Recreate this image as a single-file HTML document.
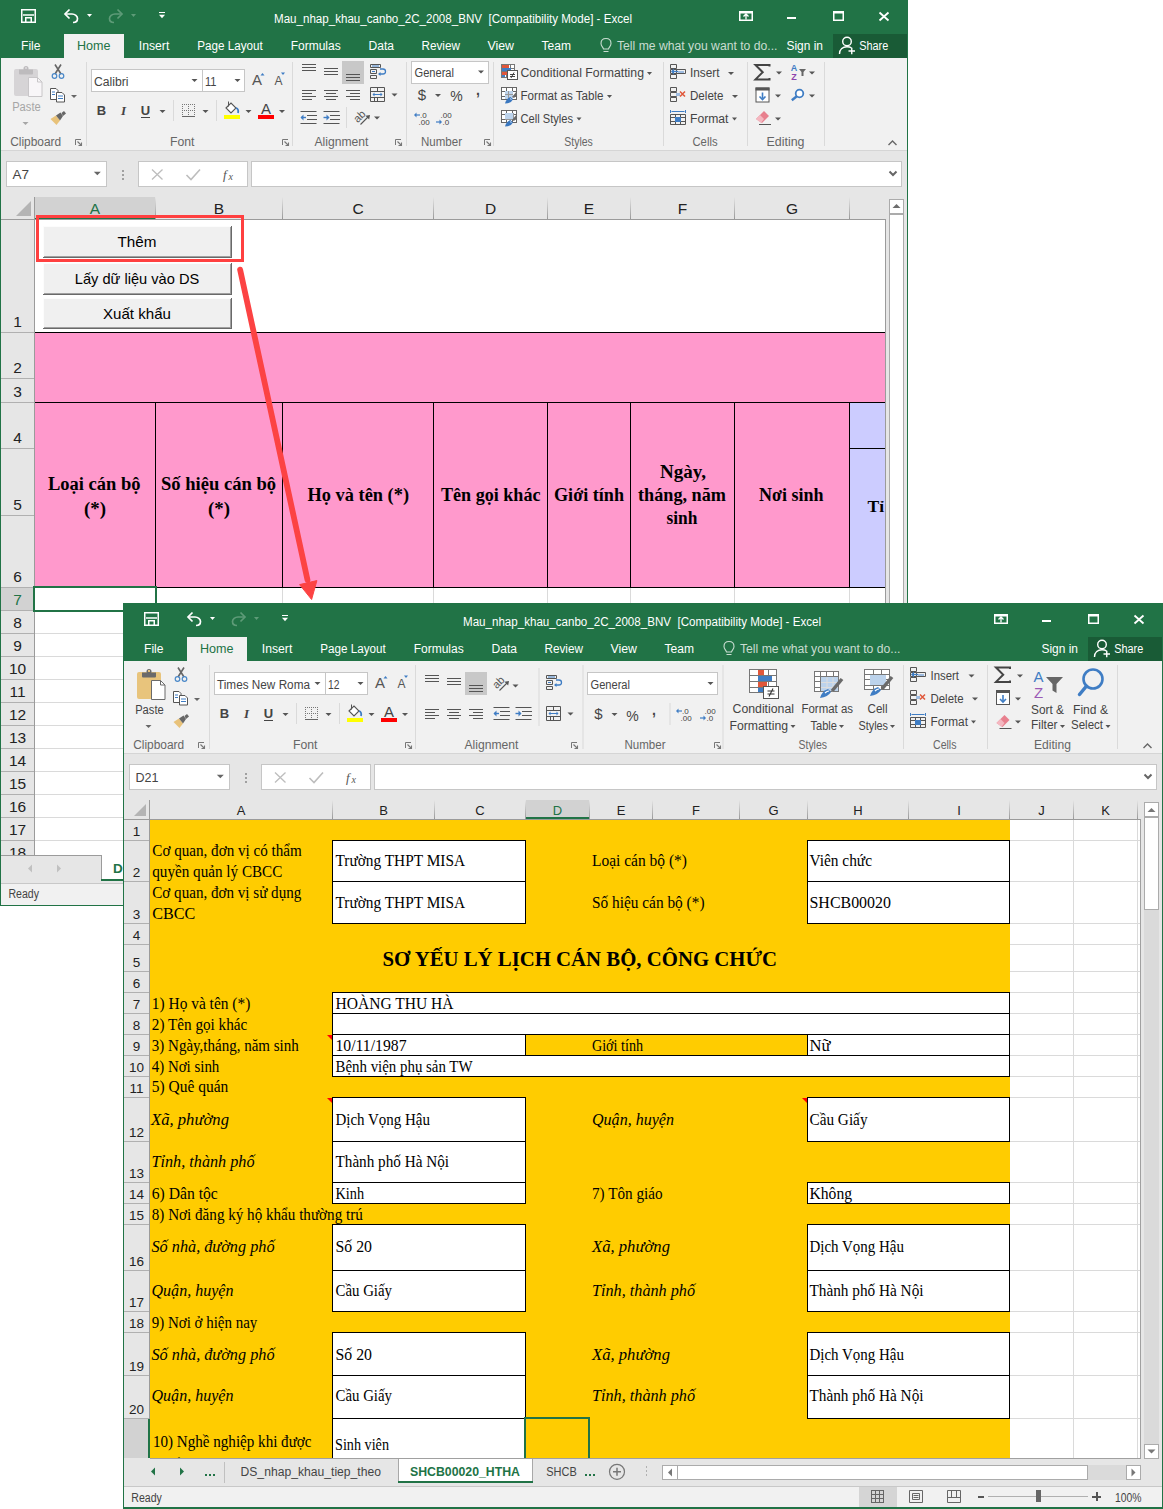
<!DOCTYPE html>
<html><head><meta charset="utf-8"><style>
html,body{margin:0;padding:0;background:#fff;width:1163px;height:1509px;overflow:hidden}
svg{display:block;font-family:"Liberation Sans",sans-serif}
</style></head><body>
<svg width="1163" height="1509" viewBox="0 0 1163 1509">
<defs><linearGradient id="sepg" x1="0" y1="0" x2="0" y2="1"><stop offset="0" stop-color="#e6e6e6"/><stop offset="1" stop-color="#999"/></linearGradient></defs>
<rect x="0" y="0" width="1163" height="1509" fill="#fff"/>
<g transform="translate(0,0)">
<rect x="0" y="0" width="908" height="906" fill="#e6e6e6" />
<rect x="0" y="0" width="908" height="58" fill="#217346" />
<path d="M21.75 9.75 h13.5 v12.5 h-13.5 Z" fill="none" stroke="#fff" stroke-width="1.5" />
<path d="M23 15 h11" fill="none" stroke="#fff" stroke-width="1.5" />
<path d="M25.75 22 v-4.25 h5.5 v4.25" fill="none" stroke="#fff" stroke-width="1.5" />
<path d="M69.5 9.5 L65 14 L69.5 18.5" fill="none" stroke="#fff" stroke-width="1.7" />
<path d="M65.5 14 H72 C75 14 77.5 16 77.5 18.5 C77.5 21 75.5 22.5 73 22.5" fill="none" stroke="#fff" stroke-width="1.7" />
<path d="M87 14 L92 14 L89.5 17 Z" fill="#fff" shape-rendering="geometricPrecision"/>
<path d="M117.5 9.5 L122 14 L117.5 18.5" fill="none" stroke="#5e9b78" stroke-width="1.7" />
<path d="M121.5 14 H115 C112 14 109.5 16 109.5 18.5 C109.5 21 111.5 22.5 114 22.5" fill="none" stroke="#5e9b78" stroke-width="1.7" />
<path d="M131 14 L136 14 L133.5 17 Z" fill="#5e9b78" shape-rendering="geometricPrecision"/>
<rect x="159" y="12" width="6" height="1" fill="#fff" />
<path d="M159 14.75 L165 14.75 L162 18.25 Z" fill="#fff" shape-rendering="geometricPrecision"/>
<text x="453" y="22.5" fill="#fff" font-size="12" text-anchor="middle" textLength="358" lengthAdjust="spacingAndGlyphs" >Mau_nhap_khau_canbo_2C_2008_BNV  [Compatibility Mode] - Excel</text>
<path d="M739.75 11.75 h12.5 v8.5 h-12.5 Z" fill="none" stroke="#fff" stroke-width="1.5" />
<rect x="739" y="11" width="14" height="2.5" fill="#fff" />
<path d="M746 19.5 v-5 M743.5 16.5 L746 14 L748.5 16.5" fill="none" stroke="#fff" stroke-width="1.3" />
<rect x="787" y="17" width="9" height="2" fill="#fff" />
<path d="M833.75 11.75 h9.5 v8.5 h-9.5 Z" fill="none" stroke="#fff" stroke-width="1.5" />
<rect x="833" y="11" width="11" height="2.5" fill="#fff" />
<path d="M879.5 12.5 L888.5 20.5 M888.5 12.5 L879.5 20.5" fill="none" stroke="#fff" stroke-width="1.8" />
<text x="21" y="50" fill="#fff" font-size="12" textLength="19.5" lengthAdjust="spacingAndGlyphs" >File</text>
<text x="138.8" y="50" fill="#fff" font-size="12" textLength="30.5" lengthAdjust="spacingAndGlyphs" >Insert</text>
<text x="197.2" y="50" fill="#fff" font-size="12" textLength="65.5" lengthAdjust="spacingAndGlyphs" >Page Layout</text>
<text x="290.7" y="50" fill="#fff" font-size="12" textLength="50" lengthAdjust="spacingAndGlyphs" >Formulas</text>
<text x="368.5" y="50" fill="#fff" font-size="12" textLength="25.5" lengthAdjust="spacingAndGlyphs" >Data</text>
<text x="421.5" y="50" fill="#fff" font-size="12" textLength="38.5" lengthAdjust="spacingAndGlyphs" >Review</text>
<text x="487.5" y="50" fill="#fff" font-size="12" textLength="26.5" lengthAdjust="spacingAndGlyphs" >View</text>
<text x="541.5" y="50" fill="#fff" font-size="12" textLength="29.5" lengthAdjust="spacingAndGlyphs" >Team</text>
<rect x="64" y="34" width="60" height="24" fill="#f1f1f1" />
<text x="77" y="50" fill="#217346" font-size="12" textLength="33.5" lengthAdjust="spacingAndGlyphs" >Home</text>
<path d="M606 38.5 C602.5 38.5 601 41 601 43.5 C601 46 603 47 603.5 49 L608.5 49 C609 47 611 46 611 43.5 C611 41 609.5 38.5 606 38.5 Z" fill="none" stroke="#c9ddd1" stroke-width="1.1" />
<rect x="603.5" y="51" width="5" height="1" fill="#c9ddd1" />
<text x="617" y="50" fill="#c9ddd1" font-size="12" textLength="160.5" lengthAdjust="spacingAndGlyphs" >Tell me what you want to do...</text>
<text x="786.5" y="50" fill="#fff" font-size="12" textLength="36.5" lengthAdjust="spacingAndGlyphs" >Sign in</text>
<rect x="833" y="34" width="74" height="24" fill="#195b36" />
<circle cx="847" cy="41.5" r="4.3" fill="none" stroke="#fff" stroke-width="1.4"/>
<path d="M839.5 54 C839.5 49 843 46.8 847 46.8 C849 46.8 850.5 47.2 851.5 48" fill="none" stroke="#fff" stroke-width="1.4" />
<path d="M848.5 51 h6.5 M851.75 47.75 v6.5" fill="none" stroke="#fff" stroke-width="1.4" />
<text x="859.2" y="50" fill="#fff" font-size="12" textLength="29" lengthAdjust="spacingAndGlyphs" >Share</text>
<rect x="0" y="58" width="908" height="92" fill="#f1f1f1" />
<rect x="0" y="150" width="908" height="1" fill="#d5d5d5" />
<path d="M16 69 h20 a2 2 0 0 1 2 2 v23 a2 2 0 0 1 -2 2 h-20 a2 2 0 0 1 -2 -2 v-23 a2 2 0 0 1 2 -2 Z" fill="#d6d4d6" />
<path d="M19 69.5 h14 v4 a1 1 0 0 1 -1 1 h-12 a1 1 0 0 1 -1 -1 Z" fill="#bdbbbd" />
<circle cx="26" cy="68.5" r="2.5" fill="#bdbbbd"/>
<rect x="25" y="67" width="2" height="2" fill="#d6d4d6" />
<path d="M28.5 77.5 h9 l4.5 4.5 v14.5 h-13.5 Z" fill="#f8f6f8" stroke="#c8c6c8" stroke-width="1" />
<path d="M37.5 77.5 v4.5 h4.5" fill="none" stroke="#c8c6c8" stroke-width="1" />
<text x="12.2" y="110.7" fill="#a6a6a6" font-size="12" textLength="28.5" lengthAdjust="spacingAndGlyphs" >Paste</text>
<path d="M22.5 122 L28.5 122 L25.5 125 Z" fill="#a6a6a6" shape-rendering="geometricPrecision"/>
<path d="M55 64.5 L61 74 M61 64.5 L55 74" fill="none" stroke="#666" stroke-width="1.6" />
<circle cx="54.5" cy="76" r="2.3" fill="none" stroke="#4a88c8" stroke-width="1.2"/>
<circle cx="61.5" cy="76" r="2.3" fill="none" stroke="#4a88c8" stroke-width="1.2"/>
<path d="M50.5 88.5 h5.5 l2 2 v9 h-7.5 Z" fill="#fff" stroke="#555" stroke-width="1" />
<path d="M56.5 92.5 h5.5 l2.5 2.5 v7 h-8 Z" fill="#fff" stroke="#555" stroke-width="1" />
<path d="M52 92 h3 M52 94.5 h3 M58 96 h5 M58 98.5 h5" fill="none" stroke="#3f7dc4" stroke-width="1" />
<path d="M71 95 L77 95 L74 98 Z" fill="#666" shape-rendering="geometricPrecision"/>
<path d="M50.5 119 L56 115.5 L60 120.5 L56.5 125 Z" fill="#e8c27a" />
<path d="M56 115.5 L60.5 112.5 L63 116 L60 120.5 Z" fill="#666" />
<path d="M61.5 113 L64 111 L66 113.5 L63 116 Z" fill="#666" />
<text x="10.2" y="145.5" fill="#666" font-size="12" textLength="51" lengthAdjust="spacingAndGlyphs" >Clipboard</text>
<path d="M75.5 145 v-5.5 h5.5" fill="none" stroke="#777" stroke-width="1" />
<path d="M77.5 141.5 L81.5 145.5 M78.5 145.5 h3 v-3" fill="none" stroke="#777" stroke-width="1.1" />
<rect x="86" y="62" width="1" height="84" fill="#dadada" />
<rect x="91" y="69" width="112" height="23" fill="#c6c6c6" />
<rect x="92" y="70" width="110" height="21" fill="#fff" />
<rect x="202" y="69" width="43" height="23" fill="#c6c6c6" />
<rect x="203" y="70" width="41" height="21" fill="#fff" />
<text x="94" y="85.5" fill="#444" font-size="12" textLength="34.5" lengthAdjust="spacingAndGlyphs" >Calibri</text>
<path d="M191.5 79 L197.5 79 L194.5 82 Z" fill="#555" shape-rendering="geometricPrecision"/>
<text x="205" y="85.5" fill="#444" font-size="12" textLength="11.5" lengthAdjust="spacingAndGlyphs" >11</text>
<path d="M234.5 79 L240.5 79 L237.5 82 Z" fill="#555" shape-rendering="geometricPrecision"/>
<text x="257" y="84.5" fill="#555" font-size="15" text-anchor="middle" >A</text>
<path d="M260.5 75.5 L262.5 73 L264.5 75.5 Z" fill="#3f7dc4" />
<text x="278.5" y="84.5" fill="#555" font-size="12" text-anchor="middle" >A</text>
<path d="M281 72.5 L285 72.5 L283 75 Z" fill="#3f7dc4" />
<text x="101.5" y="115" fill="#444" font-size="13" font-weight="bold" text-anchor="middle" >B</text>
<text x="123.5" y="115" fill="#444" font-size="13" font-family="Liberation Serif" font-weight="bold" font-style="italic" text-anchor="middle" >I</text>
<text x="145.5" y="115" fill="#444" font-size="13" font-weight="bold" text-anchor="middle" >U</text>
<rect x="141" y="117" width="9" height="1" fill="#444" />
<path d="M159.5 110 L165.5 110 L162.5 113 Z" fill="#555" shape-rendering="geometricPrecision"/>
<rect x="173" y="100" width="1" height="21" fill="#dadada" />
<path d="M182 104.5 h1 M182 110.5 h1 M182.5 104 v1 M188.5 104 v1 M194.5 104 v1 M184 104.5 h1 M184 110.5 h1 M182.5 106 v1 M188.5 106 v1 M194.5 106 v1 M186 104.5 h1 M186 110.5 h1 M182.5 108 v1 M188.5 108 v1 M194.5 108 v1 M188 104.5 h1 M188 110.5 h1 M182.5 110 v1 M188.5 110 v1 M194.5 110 v1 M190 104.5 h1 M190 110.5 h1 M182.5 112 v1 M188.5 112 v1 M194.5 112 v1 M192 104.5 h1 M192 110.5 h1 M182.5 114 v1 M188.5 114 v1 M194.5 114 v1 M194 104.5 h1 M194 110.5 h1 M182.5 116 v1 M188.5 116 v1 M194.5 116 v1 " fill="none" stroke="#777" stroke-width="1" />
<rect x="182" y="116" width="13" height="1" fill="#666" />
<path d="M202.5 110 L208.5 110 L205.5 113 Z" fill="#555" shape-rendering="geometricPrecision"/>
<rect x="216" y="100" width="1" height="21" fill="#dadada" />
<path d="M226 108 L231 103 L236 108 L231 113 Z" fill="#fff" stroke="#555" stroke-width="1.1" />
<path d="M228.5 101.5 v5" fill="none" stroke="#555" stroke-width="1" />
<path d="M236 108 q3 1 2 5" fill="none" stroke="#3f7dc4" stroke-width="1.8" />
<rect x="224" y="115" width="16" height="4" fill="#ffff00" />
<path d="M245.5 110 L251.5 110 L248.5 113 Z" fill="#555" shape-rendering="geometricPrecision"/>
<text x="266" y="113.5" fill="#444" font-size="15" text-anchor="middle" >A</text>
<rect x="258" y="115" width="16" height="4" fill="#ff0000" />
<path d="M279 110 L285 110 L282 113 Z" fill="#555" shape-rendering="geometricPrecision"/>
<text x="170" y="145.5" fill="#666" font-size="12" textLength="24.5" lengthAdjust="spacingAndGlyphs" >Font</text>
<path d="M282.5 145 v-5.5 h5.5" fill="none" stroke="#777" stroke-width="1" />
<path d="M284.5 141.5 L288.5 145.5 M285.5 145.5 h3 v-3" fill="none" stroke="#777" stroke-width="1.1" />
<rect x="292" y="62" width="1" height="84" fill="#dadada" />
<path d="M302 64.5 h14 M302 67.5 h14 M302 70.5 h14 " fill="none" stroke="#555" stroke-width="1" />
<path d="M324 68.5 h14 M324 71.5 h14 M324 74.5 h14 " fill="none" stroke="#555" stroke-width="1" />
<rect x="342" y="61" width="22" height="23" fill="#c8c8c8" />
<path d="M346 74.5 h14 M346 77.5 h14 M346 80.5 h14 " fill="none" stroke="#555" stroke-width="1" />
<path d="M370.5 64.5 h10 v3 h-10 Z M370.5 69.5 h6 v4 h-6 Z M370.5 75.5 h6 v3 h-6 Z" fill="none" stroke="#555" stroke-width="1" />
<path d="M372 66 h7 M372 71.5 h3" fill="none" stroke="#3f7dc4" stroke-width="1" />
<path d="M380 69 h3 a2.5 2.5 0 0 1 0 5 h-4" fill="none" stroke="#3f7dc4" stroke-width="1.3" />
<path d="M378 74 l2.5 -2 v4 Z" fill="#3f7dc4" />
<path d="M302 90.5 h14 M302 93.5 h10 M302 96.5 h14 M302 99.5 h10 " fill="none" stroke="#555" stroke-width="1" />
<path d="M324 90.5 h14 M326 93.5 h10 M324 96.5 h14 M326 99.5 h10 " fill="none" stroke="#555" stroke-width="1" />
<path d="M346 90.5 h14 M350 93.5 h10 M346 96.5 h14 M350 99.5 h10 " fill="none" stroke="#555" stroke-width="1" />
<path d="M370.5 87.5 h14 v14 h-14 Z M370.5 91.5 h14 M370.5 97.5 h14 M377.5 87.5 v4 M377.5 97.5 v4 M374.5 97.5 v4" fill="none" stroke="#555" stroke-width="1" />
<path d="M373 94.5 h9" fill="none" stroke="#3f7dc4" stroke-width="1" />
<path d="M372.5 94.5 l2 -2 v4 Z M382.5 94.5 l-2 -2 v4 Z" fill="#3f7dc4" />
<path d="M391.5 93.5 L397.5 93.5 L394.5 96.5 Z" fill="#555" shape-rendering="geometricPrecision"/>
<path d="M300.5 111.5 h16 M307 115.5 h10 M307 119.5 h10 M300.5 123.5 h16" fill="none" stroke="#555" stroke-width="1" />
<path d="M301 117.5 h5" fill="none" stroke="#3f7dc4" stroke-width="1.4" />
<path d="M300.5 117.5 l3 -3 v6 Z" fill="#3f7dc4" />
<path d="M323.5 111.5 h16 M330 115.5 h10 M330 119.5 h10 M323.5 123.5 h16" fill="none" stroke="#555" stroke-width="1" />
<path d="M323.5 117.5 h5" fill="none" stroke="#3f7dc4" stroke-width="1.4" />
<path d="M329.5 117.5 l-3 -3 v6 Z" fill="#3f7dc4" />
<rect x="346" y="107" width="1" height="21" fill="#dadada" />
<text x="359.5" y="120" fill="#555" font-size="11" text-anchor="middle" transform="rotate(-45 359.5 116.5)">ab</text>
<path d="M360.5 124.5 L368 117" fill="none" stroke="#555" stroke-width="1.1" />
<path d="M370 115 L369.2 119.6 L365.4 115.8 Z" fill="#555" />
<path d="M374 116.5 L380 116.5 L377 119.5 Z" fill="#555" shape-rendering="geometricPrecision"/>
<text x="314.5" y="145.5" fill="#666" font-size="12" textLength="54" lengthAdjust="spacingAndGlyphs" >Alignment</text>
<path d="M395.5 145 v-5.5 h5.5" fill="none" stroke="#777" stroke-width="1" />
<path d="M397.5 141.5 L401.5 145.5 M398.5 145.5 h3 v-3" fill="none" stroke="#777" stroke-width="1.1" />
<rect x="406" y="62" width="1" height="84" fill="#dadada" />
<rect x="411" y="61" width="78" height="23" fill="#c6c6c6" />
<rect x="412" y="62" width="76" height="21" fill="#fff" />
<text x="414.5" y="77" fill="#444" font-size="12" textLength="39.5" lengthAdjust="spacingAndGlyphs" >General</text>
<path d="M478 70.5 L484 70.5 L481 73.5 Z" fill="#555" shape-rendering="geometricPrecision"/>
<text x="422" y="100" fill="#444" font-size="15" text-anchor="middle" >$</text>
<path d="M435 94 L441 94 L438 97 Z" fill="#555" shape-rendering="geometricPrecision"/>
<text x="456.5" y="101" fill="#444" font-size="14" text-anchor="middle" >%</text>
<text x="478" y="95" fill="#444" font-size="14" font-weight="bold" text-anchor="middle" >,</text>
<text x="420" y="117.5" fill="#444" font-size="8" >.0</text>
<text x="418.5" y="124.5" fill="#444" font-size="8" >.00</text>
<path d="M415 115 h5" fill="none" stroke="#3f7dc4" stroke-width="1.2" />
<path d="M414 115 l2.5 -2.5 v5 Z" fill="#3f7dc4" />
<text x="440.5" y="117.5" fill="#444" font-size="8" >.00</text>
<text x="442.5" y="124.5" fill="#444" font-size="8" >.0</text>
<path d="M436 122 h5" fill="none" stroke="#3f7dc4" stroke-width="1.2" />
<path d="M442 122 l-2.5 -2.5 v5 Z" fill="#3f7dc4" />
<text x="421" y="145.5" fill="#666" font-size="12" textLength="41" lengthAdjust="spacingAndGlyphs" >Number</text>
<path d="M484.5 145 v-5.5 h5.5" fill="none" stroke="#777" stroke-width="1" />
<path d="M486.5 141.5 L490.5 145.5 M487.5 145.5 h3 v-3" fill="none" stroke="#777" stroke-width="1.1" />
<rect x="493" y="62" width="1" height="84" fill="#dadada" />
<rect x="501" y="64" width="14" height="14" fill="#777" />
<rect x="502" y="65" width="12" height="12" fill="#fff" />
<path d="M506.5 64 v14 M510.5 64 v14 M501 68.5 h14 M501 71.5 h14 M501 74.5 h14 " fill="none" stroke="#777" stroke-width="1" shape-rendering="crispEdges"/>
<rect x="502" y="65" width="7" height="3" fill="#e0573a" />
<rect x="502" y="68" width="9" height="3" fill="#3f7dc4" />
<rect x="502" y="72" width="5" height="3" fill="#e0573a" />
<rect x="502" y="75" width="3" height="2" fill="#3f7dc4" />
<rect x="507" y="70" width="11" height="10" fill="#555" />
<rect x="508" y="71" width="9" height="8" fill="#fff" />
<path d="M510 74.5 h5 M510 76.5 h5 M511 78 L514 72.5" fill="none" stroke="#333" stroke-width="0.9" />
<text x="520.5" y="77" fill="#444" font-size="12" textLength="123.5" lengthAdjust="spacingAndGlyphs" >Conditional Formatting</text>
<path d="M647 72 L652 72 L649.5 75 Z" fill="#555" shape-rendering="geometricPrecision"/>
<rect x="501" y="87" width="16" height="13" fill="#666" />
<rect x="502" y="88" width="14" height="11" fill="#fff" />
<path d="M506.5 87 v13 M512.5 87 v13 M501 91.5 h16 M501 96.5 h16 " fill="none" stroke="#666" stroke-width="1" shape-rendering="crispEdges"/>
<rect x="505" y="91" width="8" height="8" fill="#bcd3ec" />
<path d="M508.5 91 v8 M505 94.5 h8" fill="none" stroke="#999" stroke-width="1" shape-rendering="crispEdges"/>
<path d="M512 97 L517 91 L517 95 L514 98 Z" fill="#6a6a6a" />
<path d="M505 103.5 q1 -5 5.5 -6.5 l2.5 2.5 q-2 4 -8 4 Z" fill="#3a77bf" />
<path d="M510 99 q1 -0.5 1.5 0.5" fill="none" stroke="#fff" stroke-width="0.8" />
<text x="520.5" y="100" fill="#444" font-size="12" textLength="83" lengthAdjust="spacingAndGlyphs" >Format as Table</text>
<path d="M607 95 L612 95 L609.5 98 Z" fill="#555" shape-rendering="geometricPrecision"/>
<rect x="501" y="110" width="16" height="13" fill="#666" />
<rect x="502" y="111" width="14" height="11" fill="#fff" />
<path d="M506.5 110 v13 M512.5 110 v13 M501 114.5 h16 M501 119.5 h16 " fill="none" stroke="#666" stroke-width="1" shape-rendering="crispEdges"/>
<rect x="505" y="113" width="9" height="6" fill="#bcd3ec" />
<path d="M505 119.5 h11 M513.5 113 v6" fill="none" stroke="#999" stroke-width="1" shape-rendering="crispEdges"/>
<path d="M512 120 L517 114 L517 118 L514 121 Z" fill="#6a6a6a" />
<path d="M505 126.5 q1 -5 5.5 -6.5 l2.5 2.5 q-2 4 -8 4 Z" fill="#3a77bf" />
<path d="M510 122 q1 -0.5 1.5 0.5" fill="none" stroke="#fff" stroke-width="0.8" />
<text x="520.5" y="122.6" fill="#444" font-size="12" textLength="52.5" lengthAdjust="spacingAndGlyphs" >Cell Styles</text>
<path d="M576.5 117.5 L581.5 117.5 L579 120.5 Z" fill="#555" shape-rendering="geometricPrecision"/>
<text x="564.3" y="145.5" fill="#666" font-size="12" textLength="28.5" lengthAdjust="spacingAndGlyphs" >Styles</text>
<rect x="663" y="62" width="1" height="84" fill="#dadada" />
<path d="M670.5 64.5 h6 v4 h-6 Z M670.5 69.5 h6 v4 h-6 Z M670.5 74.5 h6 v4 h-6 Z M676.5 69.5 h9 v4 h-9 Z" fill="none" stroke="#555" stroke-width="1" />
<rect x="678" y="71" width="6" height="2" fill="#9dbbe0" />
<path d="M672 71.5 h6" fill="none" stroke="#3f7dc4" stroke-width="1.3" />
<path d="M671 71.5 l3 -3 v6 Z" fill="#3f7dc4" />
<text x="690" y="77" fill="#444" font-size="12" textLength="29.5" lengthAdjust="spacingAndGlyphs" >Insert</text>
<path d="M728 72 L734 72 L731 75 Z" fill="#555" shape-rendering="geometricPrecision"/>
<path d="M670.5 87.5 h6 v4 h-6 Z M670.5 92.5 h6 v4 h-6 Z M670.5 97.5 h6 v4 h-6 Z" fill="none" stroke="#555" stroke-width="1" />
<rect x="676" y="93" width="4" height="3" fill="#9dbbe0" />
<path d="M680 91.5 l5 5 M685 91.5 l-5 5" fill="none" stroke="#e0573a" stroke-width="1.5" />
<text x="690" y="100" fill="#444" font-size="12" textLength="33.5" lengthAdjust="spacingAndGlyphs" >Delete</text>
<path d="M732 95 L738 95 L735 98 Z" fill="#555" shape-rendering="geometricPrecision"/>
<path d="M670.5 114.5 h15 v10 h-15 Z M670.5 117.5 h15 M670.5 121.5 h15 M675.5 114.5 v10 M680.5 114.5 v10" fill="none" stroke="#555" stroke-width="1" />
<rect x="675" y="117" width="6" height="5" fill="#3f7dc4" />
<path d="M671.5 111.5 h13" fill="none" stroke="#3f7dc4" stroke-width="1" />
<path d="M670.5 110 v3 M685.5 110 v3" fill="none" stroke="#3f7dc4" stroke-width="1" />
<text x="690" y="122.6" fill="#444" font-size="12" textLength="38.5" lengthAdjust="spacingAndGlyphs" >Format</text>
<path d="M732 117.5 L737 117.5 L734.5 120.5 Z" fill="#555" shape-rendering="geometricPrecision"/>
<text x="692.5" y="145.5" fill="#666" font-size="12" textLength="25" lengthAdjust="spacingAndGlyphs" >Cells</text>
<rect x="747" y="62" width="1" height="84" fill="#dadada" />
<path d="M769.5 66.5 v-1.5 h-14 l7.2 7.2 l-7.2 7.2 h14 v-1.5" fill="none" stroke="#444" stroke-width="2" />
<path d="M776 71.5 L782 71.5 L779 74.5 Z" fill="#555" shape-rendering="geometricPrecision"/>
<text x="794" y="71" fill="#3f7dc4" font-size="9" font-weight="bold" text-anchor="middle" >A</text>
<text x="794" y="80" fill="#8e44ad" font-size="9" font-weight="bold" text-anchor="middle" >Z</text>
<path d="M799 69 h7 l-2.5 3 v4 h-2 v-4 Z" fill="#666" />
<path d="M809 71.5 L815 71.5 L812 74.5 Z" fill="#555" shape-rendering="geometricPrecision"/>
<rect x="755.5" y="87.5" width="14" height="15" fill="#555" />
<rect x="756.5" y="88.5" width="12" height="13" fill="#fff" />
<rect x="755.5" y="87.5" width="14" height="3" fill="#555" />
<path d="M762.5 92.5 v6" fill="none" stroke="#3f7dc4" stroke-width="1.6" />
<path d="M759.5 96.5 l3 3 l3 -3" fill="none" stroke="#3f7dc4" stroke-width="1.6" />
<path d="M775 94.5 L781 94.5 L778 97.5 Z" fill="#555" shape-rendering="geometricPrecision"/>
<circle cx="799.5" cy="93.5" r="3.8" fill="#fff" stroke="#3f7dc4" stroke-width="1.8"/>
<path d="M796.8 96.2 L791.8 100.2" fill="none" stroke="#3f7dc4" stroke-width="2.4" />
<path d="M809 94.5 L815 94.5 L812 97.5 Z" fill="#555" shape-rendering="geometricPrecision"/>
<path d="M756 119 L764 111 L769 116 L762 123 Z" fill="#e8808e" />
<path d="M756 119 L760 115 L764 119 L761 123 Z" fill="#f4b7c0" />
<rect x="759" y="124" width="12" height="1" fill="#555" />
<path d="M775 117.5 L781 117.5 L778 120.5 Z" fill="#555" shape-rendering="geometricPrecision"/>
<text x="766.5" y="145.5" fill="#666" font-size="12" textLength="38" lengthAdjust="spacingAndGlyphs" >Editing</text>
<rect x="824" y="62" width="1" height="84" fill="#dadada" />
<path d="M888.5 145 L892.5 141 L896.5 145" fill="none" stroke="#666" stroke-width="1.4" />
<rect x="0" y="151" width="908" height="46" fill="#e6e6e6" />
<rect x="6" y="161" width="101" height="26" fill="#c6c6c6" />
<rect x="7" y="162" width="99" height="24" fill="#fff" />
<text x="12.5" y="178.7" fill="#444" font-size="12" textLength="16.5" lengthAdjust="spacingAndGlyphs" >A7</text>
<path d="M93.8 171.75 L100.8 171.75 L97.3 175.25 Z" fill="#666" shape-rendering="geometricPrecision"/>
<rect x="122" y="170" width="2" height="2" fill="#a0a0a0" />
<rect x="122" y="174" width="2" height="2" fill="#a0a0a0" />
<rect x="122" y="178" width="2" height="2" fill="#a0a0a0" />
<rect x="138" y="161" width="110" height="26" fill="#c6c6c6" />
<rect x="139" y="162" width="108" height="24" fill="#fff" />
<path d="M152 169.5 L162.5 179.5 M162.5 169.5 L152 179.5" fill="none" stroke="#bdbdbd" stroke-width="1.3" />
<path d="M186.5 175 L191 179.5 L200 169.5" fill="none" stroke="#bdbdbd" stroke-width="1.6" />
<text x="223" y="179" fill="#555" font-size="13" font-family="Liberation Serif" font-style="italic" >f</text>
<text x="228.5" y="180" fill="#555" font-size="10" font-family="Liberation Serif" font-style="italic" >x</text>
<rect x="251" y="161" width="651" height="26" fill="#c6c6c6" />
<rect x="252" y="162" width="649" height="24" fill="#fff" />
<path d="M889.5 171.5 L893 175 L896.5 171.5" fill="none" stroke="#666" stroke-width="2" />
<rect x="0" y="197" width="908" height="23" fill="#e6e6e6" />
<rect x="35" y="220" width="850" height="635" fill="#fff" />
<rect x="35" y="610" width="850" height="1" fill="#dadada" />
<rect x="35" y="633" width="850" height="1" fill="#dadada" />
<rect x="35" y="656" width="850" height="1" fill="#dadada" />
<rect x="35" y="679" width="850" height="1" fill="#dadada" />
<rect x="35" y="702" width="850" height="1" fill="#dadada" />
<rect x="35" y="725" width="850" height="1" fill="#dadada" />
<rect x="35" y="748" width="850" height="1" fill="#dadada" />
<rect x="35" y="771" width="850" height="1" fill="#dadada" />
<rect x="35" y="794" width="850" height="1" fill="#dadada" />
<rect x="35" y="817" width="850" height="1" fill="#dadada" />
<rect x="35" y="840" width="850" height="1" fill="#dadada" />
<rect x="155" y="588" width="1" height="267" fill="#dadada" />
<rect x="282" y="588" width="1" height="267" fill="#dadada" />
<rect x="433" y="588" width="1" height="267" fill="#dadada" />
<rect x="547" y="588" width="1" height="267" fill="#dadada" />
<rect x="630" y="588" width="1" height="267" fill="#dadada" />
<rect x="734" y="588" width="1" height="267" fill="#dadada" />
<rect x="849" y="588" width="1" height="267" fill="#dadada" />
<rect x="35" y="332" width="850" height="255" fill="#ff99cc" />
<rect x="849" y="403" width="36" height="184" fill="#ccccff" />
<rect x="35" y="332" width="850" height="1" fill="#000" />
<rect x="35" y="402" width="850" height="1" fill="#000" />
<rect x="35" y="587" width="850" height="1" fill="#000" />
<rect x="849" y="448" width="36" height="1" fill="#000" />
<rect x="155" y="402" width="1" height="186" fill="#000" />
<rect x="282" y="402" width="1" height="186" fill="#000" />
<rect x="433" y="402" width="1" height="186" fill="#000" />
<rect x="547" y="402" width="1" height="186" fill="#000" />
<rect x="630" y="402" width="1" height="186" fill="#000" />
<rect x="734" y="402" width="1" height="186" fill="#000" />
<rect x="849" y="402" width="1" height="186" fill="#000" />
<rect x="885" y="219" width="1" height="636" fill="#9b9b9b" />
<text x="48" y="490.2" fill="#000" font-size="18.5" font-family="Liberation Serif" font-weight="bold" textLength="92.5" lengthAdjust="spacingAndGlyphs" >Loại cán bộ</text>
<text x="84" y="514.7" fill="#000" font-size="18.5" font-family="Liberation Serif" font-weight="bold" textLength="22" lengthAdjust="spacingAndGlyphs" >(*)</text>
<text x="161" y="490.2" fill="#000" font-size="18.5" font-family="Liberation Serif" font-weight="bold" textLength="115" lengthAdjust="spacingAndGlyphs" >Số hiệu cán bộ</text>
<text x="208" y="514.7" fill="#000" font-size="18.5" font-family="Liberation Serif" font-weight="bold" textLength="22" lengthAdjust="spacingAndGlyphs" >(*)</text>
<text x="307.5" y="500.9" fill="#000" font-size="18.5" font-family="Liberation Serif" font-weight="bold" textLength="101.5" lengthAdjust="spacingAndGlyphs" >Họ và tên (*)</text>
<text x="441" y="501" fill="#000" font-size="18.5" font-family="Liberation Serif" font-weight="bold" textLength="99.5" lengthAdjust="spacingAndGlyphs" >Tên gọi khác</text>
<text x="554" y="501" fill="#000" font-size="18.5" font-family="Liberation Serif" font-weight="bold" textLength="70" lengthAdjust="spacingAndGlyphs" >Giới tính</text>
<text x="660" y="478" fill="#000" font-size="18.5" font-family="Liberation Serif" font-weight="bold" textLength="46" lengthAdjust="spacingAndGlyphs" >Ngày,</text>
<text x="638" y="501" fill="#000" font-size="18.5" font-family="Liberation Serif" font-weight="bold" textLength="88" lengthAdjust="spacingAndGlyphs" >tháng, năm</text>
<text x="666.5" y="524.3" fill="#000" font-size="18.5" font-family="Liberation Serif" font-weight="bold" textLength="31" lengthAdjust="spacingAndGlyphs" >sinh</text>
<text x="759" y="501" fill="#000" font-size="18.5" font-family="Liberation Serif" font-weight="bold" textLength="64.5" lengthAdjust="spacingAndGlyphs" >Nơi sinh</text>
<clipPath id="clL"><rect x="35" y="220" width="850" height="635"/></clipPath>
<g clip-path="url(#clL)">
<text x="867.5" y="512" fill="#000" font-size="17.5" font-family="Liberation Serif" font-weight="bold" >Tỉ</text>
</g>
<rect x="35" y="197" width="120" height="22" fill="#d2d2d2" />
<rect x="35" y="218" width="120" height="2" fill="#217346" />
<rect x="155" y="197" width="1" height="22" fill="url(#sepg)" />
<rect x="282" y="197" width="1" height="22" fill="url(#sepg)" />
<rect x="433" y="197" width="1" height="22" fill="url(#sepg)" />
<rect x="547" y="197" width="1" height="22" fill="url(#sepg)" />
<rect x="630" y="197" width="1" height="22" fill="url(#sepg)" />
<rect x="734" y="197" width="1" height="22" fill="url(#sepg)" />
<rect x="849" y="197" width="1" height="22" fill="url(#sepg)" />
<rect x="0" y="219" width="886" height="1" fill="#9b9b9b" />
<path d="M31 216 L31 201 L16 216 Z" fill="#b4b4b4" />
<text x="95" y="214" fill="#217346" font-size="15.5" text-anchor="middle" >A</text>
<text x="219" y="214" fill="#222" font-size="15.5" text-anchor="middle" >B</text>
<text x="358" y="214" fill="#222" font-size="15.5" text-anchor="middle" >C</text>
<text x="490.5" y="214" fill="#222" font-size="15.5" text-anchor="middle" >D</text>
<text x="589" y="214" fill="#222" font-size="15.5" text-anchor="middle" >E</text>
<text x="682.5" y="214" fill="#222" font-size="15.5" text-anchor="middle" >F</text>
<text x="792" y="214" fill="#222" font-size="15.5" text-anchor="middle" >G</text>
<text x="867" y="214" fill="#444" font-size="14" ></text>
<rect x="1" y="220" width="33" height="635" fill="#e6e6e6" />
<rect x="1" y="588" width="33" height="22" fill="#d2d2d2" />
<rect x="1" y="332" width="33" height="1" fill="#b0b0b0" />
<rect x="1" y="378" width="33" height="1" fill="#b0b0b0" />
<rect x="1" y="402" width="33" height="1" fill="#b0b0b0" />
<rect x="1" y="448" width="33" height="1" fill="#b0b0b0" />
<rect x="1" y="515" width="33" height="1" fill="#b0b0b0" />
<rect x="1" y="587" width="33" height="1" fill="#b0b0b0" />
<rect x="1" y="610" width="33" height="1" fill="#b0b0b0" />
<rect x="1" y="633" width="33" height="1" fill="#b0b0b0" />
<rect x="1" y="656" width="33" height="1" fill="#b0b0b0" />
<rect x="1" y="679" width="33" height="1" fill="#b0b0b0" />
<rect x="1" y="702" width="33" height="1" fill="#b0b0b0" />
<rect x="1" y="725" width="33" height="1" fill="#b0b0b0" />
<rect x="1" y="748" width="33" height="1" fill="#b0b0b0" />
<rect x="1" y="771" width="33" height="1" fill="#b0b0b0" />
<rect x="1" y="794" width="33" height="1" fill="#b0b0b0" />
<rect x="1" y="817" width="33" height="1" fill="#b0b0b0" />
<rect x="1" y="840" width="33" height="1" fill="#b0b0b0" />
<rect x="34" y="197" width="1" height="658" fill="#9b9b9b" />
<text x="17.5" y="327" fill="#222" font-size="15.5" text-anchor="middle" >1</text>
<text x="17.5" y="373" fill="#222" font-size="15.5" text-anchor="middle" >2</text>
<text x="17.5" y="397" fill="#222" font-size="15.5" text-anchor="middle" >3</text>
<text x="17.5" y="443" fill="#222" font-size="15.5" text-anchor="middle" >4</text>
<text x="17.5" y="510" fill="#222" font-size="15.5" text-anchor="middle" >5</text>
<text x="17.5" y="582" fill="#222" font-size="15.5" text-anchor="middle" >6</text>
<text x="17.5" y="605" fill="#217346" font-size="15.5" text-anchor="middle" >7</text>
<text x="17.5" y="628" fill="#222" font-size="15.5" text-anchor="middle" >8</text>
<text x="17.5" y="651" fill="#222" font-size="15.5" text-anchor="middle" >9</text>
<text x="17.5" y="674" fill="#222" font-size="15.5" text-anchor="middle" >10</text>
<text x="17.5" y="697" fill="#222" font-size="15.5" text-anchor="middle" >11</text>
<text x="17.5" y="720" fill="#222" font-size="15.5" text-anchor="middle" >12</text>
<text x="17.5" y="743" fill="#222" font-size="15.5" text-anchor="middle" >13</text>
<text x="17.5" y="766" fill="#222" font-size="15.5" text-anchor="middle" >14</text>
<text x="17.5" y="789" fill="#222" font-size="15.5" text-anchor="middle" >15</text>
<text x="17.5" y="812" fill="#222" font-size="15.5" text-anchor="middle" >16</text>
<text x="17.5" y="835" fill="#222" font-size="15.5" text-anchor="middle" >17</text>
<text x="17.5" y="858" fill="#222" font-size="15.5" text-anchor="middle" >18</text>
<rect x="33" y="586" width="124" height="2" fill="#217346" />
<rect x="33" y="610" width="124" height="2" fill="#217346" />
<rect x="33" y="586" width="2" height="26" fill="#217346" />
<rect x="155" y="586" width="2" height="26" fill="#217346" />
<rect x="43" y="226" width="189" height="32" fill="#696969" />
<rect x="43" y="226" width="188" height="31" fill="#a0a0a0" />
<rect x="43" y="226" width="187" height="30" fill="#f0f0f0" />
<rect x="43" y="226" width="188" height="1" fill="#fcfcfc" />
<rect x="43" y="226" width="1" height="31" fill="#fcfcfc" />
<text x="117.5" y="247" fill="#000" font-size="14.5" textLength="39" lengthAdjust="spacingAndGlyphs" >Thêm</text>
<rect x="43" y="263" width="189" height="32" fill="#696969" />
<rect x="43" y="263" width="188" height="31" fill="#a0a0a0" />
<rect x="43" y="263" width="187" height="30" fill="#f0f0f0" />
<rect x="43" y="263" width="188" height="1" fill="#fcfcfc" />
<rect x="43" y="263" width="1" height="31" fill="#fcfcfc" />
<text x="74.75" y="284" fill="#000" font-size="14.5" textLength="124.5" lengthAdjust="spacingAndGlyphs" >Lấy dữ liệu vào DS</text>
<rect x="43" y="298" width="189" height="31" fill="#696969" />
<rect x="43" y="298" width="188" height="30" fill="#a0a0a0" />
<rect x="43" y="298" width="187" height="29" fill="#f0f0f0" />
<rect x="43" y="298" width="188" height="1" fill="#fcfcfc" />
<rect x="43" y="298" width="1" height="30" fill="#fcfcfc" />
<text x="103" y="318.5" fill="#000" font-size="14.5" textLength="68" lengthAdjust="spacingAndGlyphs" >Xuất khẩu</text>
<rect x="36" y="215" width="208" height="3" fill="#ff4040" />
<rect x="36" y="259" width="208" height="3" fill="#ff4040" />
<rect x="36" y="215" width="3" height="47" fill="#ff4040" />
<rect x="241" y="215" width="3" height="47" fill="#ff4040" />
<rect x="886" y="197" width="22" height="658" fill="#e6e6e6" />
<rect x="889" y="199" width="15" height="15" fill="#ababab" />
<rect x="890" y="200" width="13" height="13" fill="#fff" />
<path d="M892.5 208 L896.5 204 L900.5 208 Z" fill="#6d6d6d" />
<rect x="889" y="214" width="15" height="640" fill="#ababab" />
<rect x="890" y="215" width="13" height="638" fill="#fff" />
<rect x="0" y="855" width="908" height="28" fill="#e6e6e6" />
<rect x="1" y="855" width="101" height="1" fill="#9b9b9b" />
<rect x="101" y="855" width="1" height="24" fill="#9b9b9b" />
<path d="M32 864.5 L28 868.5 L32 872.5 Z" fill="#c0c0c0" />
<path d="M57 864.5 L61 868.5 L57 872.5 Z" fill="#c0c0c0" />
<rect x="102" y="855" width="30" height="24" fill="#fff" />
<rect x="101" y="879" width="30" height="2" fill="#217346" />
<text x="113" y="872.5" fill="#217346" font-size="13.5" font-weight="bold" >D</text>
<rect x="0" y="883" width="908" height="23" fill="#f1f1f1" />
<rect x="0" y="883" width="908" height="1" fill="#c8c8c8" />
<text x="8.5" y="897.5" fill="#444" font-size="12" textLength="30.5" lengthAdjust="spacingAndGlyphs" >Ready</text>
<rect x="0" y="0" width="1" height="906" fill="#217346" />
<rect x="907" y="0" width="1" height="906" fill="#217346" />
<rect x="0" y="905" width="908" height="1" fill="#217346" />
</g>
<path d="M240.1 269.6 L307.5 580" fill="none" stroke="#fc4343" stroke-width="5.8" stroke-linecap="round"/>
<path d="M299.6 584.6 L316.9 580.6 L311.6 599.5 Z" fill="#fc4343" stroke="#fc4343" stroke-width="1" stroke-linejoin="round"/>
<g transform="translate(123,603)">
<rect x="0" y="0" width="1040" height="906" fill="#e6e6e6" />
<rect x="0" y="0" width="1040" height="58" fill="#217346" />
<path d="M21.75 9.75 h13.5 v12.5 h-13.5 Z" fill="none" stroke="#fff" stroke-width="1.5" />
<path d="M23 15 h11" fill="none" stroke="#fff" stroke-width="1.5" />
<path d="M25.75 22 v-4.25 h5.5 v4.25" fill="none" stroke="#fff" stroke-width="1.5" />
<path d="M69.5 9.5 L65 14 L69.5 18.5" fill="none" stroke="#fff" stroke-width="1.7" />
<path d="M65.5 14 H72 C75 14 77.5 16 77.5 18.5 C77.5 21 75.5 22.5 73 22.5" fill="none" stroke="#fff" stroke-width="1.7" />
<path d="M87 14 L92 14 L89.5 17 Z" fill="#fff" shape-rendering="geometricPrecision"/>
<path d="M117.5 9.5 L122 14 L117.5 18.5" fill="none" stroke="#5e9b78" stroke-width="1.7" />
<path d="M121.5 14 H115 C112 14 109.5 16 109.5 18.5 C109.5 21 111.5 22.5 114 22.5" fill="none" stroke="#5e9b78" stroke-width="1.7" />
<path d="M131 14 L136 14 L133.5 17 Z" fill="#5e9b78" shape-rendering="geometricPrecision"/>
<rect x="159" y="12" width="6" height="1" fill="#fff" />
<path d="M159 14.75 L165 14.75 L162 18.25 Z" fill="#fff" shape-rendering="geometricPrecision"/>
<text x="519" y="22.5" fill="#fff" font-size="12" text-anchor="middle" textLength="358" lengthAdjust="spacingAndGlyphs" >Mau_nhap_khau_canbo_2C_2008_BNV  [Compatibility Mode] - Excel</text>
<path d="M871.75 11.75 h12.5 v8.5 h-12.5 Z" fill="none" stroke="#fff" stroke-width="1.5" />
<rect x="871" y="11" width="14" height="2.5" fill="#fff" />
<path d="M878 19.5 v-5 M875.5 16.5 L878 14 L880.5 16.5" fill="none" stroke="#fff" stroke-width="1.3" />
<rect x="919" y="17" width="9" height="2" fill="#fff" />
<path d="M965.75 11.75 h9.5 v8.5 h-9.5 Z" fill="none" stroke="#fff" stroke-width="1.5" />
<rect x="965" y="11" width="11" height="2.5" fill="#fff" />
<path d="M1011.5 12.5 L1020.5 20.5 M1020.5 12.5 L1011.5 20.5" fill="none" stroke="#fff" stroke-width="1.8" />
<text x="21" y="50" fill="#fff" font-size="12" textLength="19.5" lengthAdjust="spacingAndGlyphs" >File</text>
<text x="138.8" y="50" fill="#fff" font-size="12" textLength="30.5" lengthAdjust="spacingAndGlyphs" >Insert</text>
<text x="197.2" y="50" fill="#fff" font-size="12" textLength="65.5" lengthAdjust="spacingAndGlyphs" >Page Layout</text>
<text x="290.7" y="50" fill="#fff" font-size="12" textLength="50" lengthAdjust="spacingAndGlyphs" >Formulas</text>
<text x="368.5" y="50" fill="#fff" font-size="12" textLength="25.5" lengthAdjust="spacingAndGlyphs" >Data</text>
<text x="421.5" y="50" fill="#fff" font-size="12" textLength="38.5" lengthAdjust="spacingAndGlyphs" >Review</text>
<text x="487.5" y="50" fill="#fff" font-size="12" textLength="26.5" lengthAdjust="spacingAndGlyphs" >View</text>
<text x="541.5" y="50" fill="#fff" font-size="12" textLength="29.5" lengthAdjust="spacingAndGlyphs" >Team</text>
<rect x="64" y="34" width="60" height="24" fill="#f1f1f1" />
<text x="77" y="50" fill="#217346" font-size="12" textLength="33.5" lengthAdjust="spacingAndGlyphs" >Home</text>
<path d="M606 38.5 C602.5 38.5 601 41 601 43.5 C601 46 603 47 603.5 49 L608.5 49 C609 47 611 46 611 43.5 C611 41 609.5 38.5 606 38.5 Z" fill="none" stroke="#c9ddd1" stroke-width="1.1" />
<rect x="603.5" y="51" width="5" height="1" fill="#c9ddd1" />
<text x="617" y="50" fill="#c9ddd1" font-size="12" textLength="160.5" lengthAdjust="spacingAndGlyphs" >Tell me what you want to do...</text>
<text x="918.5" y="50" fill="#fff" font-size="12" textLength="36.5" lengthAdjust="spacingAndGlyphs" >Sign in</text>
<rect x="965" y="34" width="74" height="24" fill="#195b36" />
<circle cx="979" cy="41.5" r="4.3" fill="none" stroke="#fff" stroke-width="1.4"/>
<path d="M971.5 54 C971.5 49 975 46.8 979 46.8 C981 46.8 982.5 47.2 983.5 48" fill="none" stroke="#fff" stroke-width="1.4" />
<path d="M980.5 51 h6.5 M983.75 47.75 v6.5" fill="none" stroke="#fff" stroke-width="1.4" />
<text x="991.2" y="50" fill="#fff" font-size="12" textLength="29" lengthAdjust="spacingAndGlyphs" >Share</text>
<rect x="0" y="58" width="1040" height="92" fill="#f1f1f1" />
<rect x="0" y="150" width="1040" height="1" fill="#d5d5d5" />
<path d="M16 69 h20 a2 2 0 0 1 2 2 v23 a2 2 0 0 1 -2 2 h-20 a2 2 0 0 1 -2 -2 v-23 a2 2 0 0 1 2 -2 Z" fill="#e8c47c" />
<path d="M19 69.5 h14 v4 a1 1 0 0 1 -1 1 h-12 a1 1 0 0 1 -1 -1 Z" fill="#6a6a6a" />
<circle cx="26" cy="68.5" r="2.5" fill="#6a6a6a"/>
<rect x="25" y="67" width="2" height="2" fill="#e8c47c" />
<path d="M28.5 77.5 h9 l4.5 4.5 v14.5 h-13.5 Z" fill="#fff" stroke="#6a6a6a" stroke-width="1" />
<path d="M37.5 77.5 v4.5 h4.5" fill="none" stroke="#6a6a6a" stroke-width="1" />
<text x="12.2" y="110.7" fill="#444" font-size="12" textLength="28.5" lengthAdjust="spacingAndGlyphs" >Paste</text>
<path d="M22.5 122 L28.5 122 L25.5 125 Z" fill="#666" shape-rendering="geometricPrecision"/>
<path d="M55 64.5 L61 74 M61 64.5 L55 74" fill="none" stroke="#666" stroke-width="1.6" />
<circle cx="54.5" cy="76" r="2.3" fill="none" stroke="#4a88c8" stroke-width="1.2"/>
<circle cx="61.5" cy="76" r="2.3" fill="none" stroke="#4a88c8" stroke-width="1.2"/>
<path d="M50.5 88.5 h5.5 l2 2 v9 h-7.5 Z" fill="#fff" stroke="#555" stroke-width="1" />
<path d="M56.5 92.5 h5.5 l2.5 2.5 v7 h-8 Z" fill="#fff" stroke="#555" stroke-width="1" />
<path d="M52 92 h3 M52 94.5 h3 M58 96 h5 M58 98.5 h5" fill="none" stroke="#3f7dc4" stroke-width="1" />
<path d="M71 95 L77 95 L74 98 Z" fill="#666" shape-rendering="geometricPrecision"/>
<path d="M50.5 119 L56 115.5 L60 120.5 L56.5 125 Z" fill="#e8c27a" />
<path d="M56 115.5 L60.5 112.5 L63 116 L60 120.5 Z" fill="#666" />
<path d="M61.5 113 L64 111 L66 113.5 L63 116 Z" fill="#666" />
<text x="10.2" y="145.5" fill="#666" font-size="12" textLength="51" lengthAdjust="spacingAndGlyphs" >Clipboard</text>
<path d="M75.5 145 v-5.5 h5.5" fill="none" stroke="#777" stroke-width="1" />
<path d="M77.5 141.5 L81.5 145.5 M78.5 145.5 h3 v-3" fill="none" stroke="#777" stroke-width="1.1" />
<rect x="86" y="62" width="1" height="84" fill="#dadada" />
<rect x="91" y="69" width="112" height="23" fill="#c6c6c6" />
<rect x="92" y="70" width="110" height="21" fill="#fff" />
<rect x="202" y="69" width="43" height="23" fill="#c6c6c6" />
<rect x="203" y="70" width="41" height="21" fill="#fff" />
<text x="94" y="85.5" fill="#444" font-size="12" textLength="93" lengthAdjust="spacingAndGlyphs" >Times New Roma</text>
<path d="M191.5 79 L197.5 79 L194.5 82 Z" fill="#555" shape-rendering="geometricPrecision"/>
<text x="205" y="85.5" fill="#444" font-size="12" textLength="11.5" lengthAdjust="spacingAndGlyphs" >12</text>
<path d="M234.5 79 L240.5 79 L237.5 82 Z" fill="#555" shape-rendering="geometricPrecision"/>
<text x="257" y="84.5" fill="#555" font-size="15" text-anchor="middle" >A</text>
<path d="M260.5 75.5 L262.5 73 L264.5 75.5 Z" fill="#3f7dc4" />
<text x="278.5" y="84.5" fill="#555" font-size="12" text-anchor="middle" >A</text>
<path d="M281 72.5 L285 72.5 L283 75 Z" fill="#3f7dc4" />
<text x="101.5" y="115" fill="#444" font-size="13" font-weight="bold" text-anchor="middle" >B</text>
<text x="123.5" y="115" fill="#444" font-size="13" font-family="Liberation Serif" font-weight="bold" font-style="italic" text-anchor="middle" >I</text>
<text x="145.5" y="115" fill="#444" font-size="13" font-weight="bold" text-anchor="middle" >U</text>
<rect x="141" y="117" width="9" height="1" fill="#444" />
<path d="M159.5 110 L165.5 110 L162.5 113 Z" fill="#555" shape-rendering="geometricPrecision"/>
<rect x="173" y="100" width="1" height="21" fill="#dadada" />
<path d="M182 104.5 h1 M182 110.5 h1 M182.5 104 v1 M188.5 104 v1 M194.5 104 v1 M184 104.5 h1 M184 110.5 h1 M182.5 106 v1 M188.5 106 v1 M194.5 106 v1 M186 104.5 h1 M186 110.5 h1 M182.5 108 v1 M188.5 108 v1 M194.5 108 v1 M188 104.5 h1 M188 110.5 h1 M182.5 110 v1 M188.5 110 v1 M194.5 110 v1 M190 104.5 h1 M190 110.5 h1 M182.5 112 v1 M188.5 112 v1 M194.5 112 v1 M192 104.5 h1 M192 110.5 h1 M182.5 114 v1 M188.5 114 v1 M194.5 114 v1 M194 104.5 h1 M194 110.5 h1 M182.5 116 v1 M188.5 116 v1 M194.5 116 v1 " fill="none" stroke="#777" stroke-width="1" />
<rect x="182" y="116" width="13" height="1" fill="#666" />
<path d="M202.5 110 L208.5 110 L205.5 113 Z" fill="#555" shape-rendering="geometricPrecision"/>
<rect x="216" y="100" width="1" height="21" fill="#dadada" />
<path d="M226 108 L231 103 L236 108 L231 113 Z" fill="#fff" stroke="#555" stroke-width="1.1" />
<path d="M228.5 101.5 v5" fill="none" stroke="#555" stroke-width="1" />
<path d="M236 108 q3 1 2 5" fill="none" stroke="#3f7dc4" stroke-width="1.8" />
<rect x="224" y="115" width="16" height="4" fill="#ffff00" />
<path d="M245.5 110 L251.5 110 L248.5 113 Z" fill="#555" shape-rendering="geometricPrecision"/>
<text x="266" y="113.5" fill="#444" font-size="15" text-anchor="middle" >A</text>
<rect x="258" y="115" width="16" height="4" fill="#ff0000" />
<path d="M279 110 L285 110 L282 113 Z" fill="#555" shape-rendering="geometricPrecision"/>
<text x="170" y="145.5" fill="#666" font-size="12" textLength="24.5" lengthAdjust="spacingAndGlyphs" >Font</text>
<path d="M282.5 145 v-5.5 h5.5" fill="none" stroke="#777" stroke-width="1" />
<path d="M284.5 141.5 L288.5 145.5 M285.5 145.5 h3 v-3" fill="none" stroke="#777" stroke-width="1.1" />
<rect x="292" y="62" width="1" height="84" fill="#dadada" />
<path d="M302 72.5 h14 M302 75.5 h14 M302 78.5 h14 " fill="none" stroke="#555" stroke-width="1" />
<path d="M324 75.5 h14 M324 78.5 h14 M324 81.5 h14 " fill="none" stroke="#555" stroke-width="1" />
<rect x="342" y="69" width="22" height="23" fill="#c8c8c8" />
<path d="M346 82.5 h14 M346 85.5 h14 M346 88.5 h14 " fill="none" stroke="#555" stroke-width="1" />
<text x="375.5" y="83" fill="#555" font-size="11" text-anchor="middle" transform="rotate(-45 375.5 79.5)">ab</text>
<path d="M376.5 87.5 L384 80" fill="none" stroke="#555" stroke-width="1.1" />
<path d="M386 78 L385.2 82.6 L381.4 78.8 Z" fill="#555" />
<path d="M389.5 81.5 L395.5 81.5 L392.5 84.5 Z" fill="#555" shape-rendering="geometricPrecision"/>
<rect x="415.5" y="65" width="1" height="58" fill="#dadada" />
<path d="M423.5 72.5 h10 v3 h-10 Z M423.5 77.5 h6 v4 h-6 Z M423.5 83.5 h6 v3 h-6 Z" fill="none" stroke="#555" stroke-width="1" />
<path d="M425 74 h7 M425 79.5 h3" fill="none" stroke="#3f7dc4" stroke-width="1" />
<path d="M433 77 h3 a2.5 2.5 0 0 1 0 5 h-4" fill="none" stroke="#3f7dc4" stroke-width="1.3" />
<path d="M431 82 l2.5 -2 v4 Z" fill="#3f7dc4" />
<path d="M302 106.5 h14 M302 109.5 h10 M302 112.5 h14 M302 115.5 h10 " fill="none" stroke="#555" stroke-width="1" />
<path d="M324 106.5 h14 M326 109.5 h10 M324 112.5 h14 M326 115.5 h10 " fill="none" stroke="#555" stroke-width="1" />
<path d="M346 106.5 h14 M350 109.5 h10 M346 112.5 h14 M350 115.5 h10 " fill="none" stroke="#555" stroke-width="1" />
<path d="M370.5 104.5 h16 M377 108.5 h10 M377 112.5 h10 M370.5 116.5 h16" fill="none" stroke="#555" stroke-width="1" />
<path d="M371 110.5 h5" fill="none" stroke="#3f7dc4" stroke-width="1.4" />
<path d="M370.5 110.5 l3 -3 v6 Z" fill="#3f7dc4" />
<path d="M392.5 104.5 h16 M399 108.5 h10 M399 112.5 h10 M392.5 116.5 h16" fill="none" stroke="#555" stroke-width="1" />
<path d="M392.5 110.5 h5" fill="none" stroke="#3f7dc4" stroke-width="1.4" />
<path d="M398.5 110.5 l-3 -3 v6 Z" fill="#3f7dc4" />
<path d="M423.5 103.5 h14 v14 h-14 Z M423.5 107.5 h14 M423.5 113.5 h14 M430.5 103.5 v4 M430.5 113.5 v4 M427.5 113.5 v4" fill="none" stroke="#555" stroke-width="1" />
<path d="M426 110.5 h9" fill="none" stroke="#3f7dc4" stroke-width="1" />
<path d="M425.5 110.5 l2 -2 v4 Z M435.5 110.5 l-2 -2 v4 Z" fill="#3f7dc4" />
<path d="M444.5 109.5 L450.5 109.5 L447.5 112.5 Z" fill="#555" shape-rendering="geometricPrecision"/>
<text x="341.5" y="145.5" fill="#666" font-size="12" textLength="54" lengthAdjust="spacingAndGlyphs" >Alignment</text>
<path d="M448.5 145 v-5.5 h5.5" fill="none" stroke="#777" stroke-width="1" />
<path d="M450.5 141.5 L454.5 145.5 M451.5 145.5 h3 v-3" fill="none" stroke="#777" stroke-width="1.1" />
<rect x="459.5" y="62" width="1" height="84" fill="#dadada" />
<rect x="464" y="69" width="131" height="23" fill="#c6c6c6" />
<rect x="465" y="70" width="129" height="21" fill="#fff" />
<text x="467.5" y="85.5" fill="#444" font-size="12" textLength="39.5" lengthAdjust="spacingAndGlyphs" >General</text>
<path d="M584.5 79 L590.5 79 L587.5 82 Z" fill="#555" shape-rendering="geometricPrecision"/>
<text x="475.5" y="116" fill="#444" font-size="15" text-anchor="middle" >$</text>
<path d="M488.5 110 L494.5 110 L491.5 113 Z" fill="#555" shape-rendering="geometricPrecision"/>
<text x="509.5" y="118" fill="#444" font-size="14" text-anchor="middle" >%</text>
<text x="531" y="112" fill="#444" font-size="14" font-weight="bold" text-anchor="middle" >,</text>
<rect x="546.5" y="100" width="1" height="22" fill="#dadada" />
<text x="559" y="110.5" fill="#444" font-size="8" >.0</text>
<text x="557.5" y="117.5" fill="#444" font-size="8" >.00</text>
<path d="M554 108 h5" fill="none" stroke="#3f7dc4" stroke-width="1.2" />
<path d="M553 108 l2.5 -2.5 v5 Z" fill="#3f7dc4" />
<text x="581.5" y="110.5" fill="#444" font-size="8" >.00</text>
<text x="583.5" y="117.5" fill="#444" font-size="8" >.0</text>
<path d="M577 115 h5" fill="none" stroke="#3f7dc4" stroke-width="1.2" />
<path d="M583 115 l-2.5 -2.5 v5 Z" fill="#3f7dc4" />
<text x="501.5" y="145.5" fill="#666" font-size="12" textLength="41" lengthAdjust="spacingAndGlyphs" >Number</text>
<path d="M591.5 145 v-5.5 h5.5" fill="none" stroke="#777" stroke-width="1" />
<path d="M593.5 141.5 L597.5 145.5 M594.5 145.5 h3 v-3" fill="none" stroke="#777" stroke-width="1.1" />
<rect x="599.5" y="62" width="1" height="84" fill="#dadada" />
<rect x="626" y="66" width="28" height="24" fill="#777" />
<rect x="627" y="67" width="26" height="22" fill="#fff" />
<path d="M635.5 66 v24 M645.5 66 v24 M626 72.5 h28 M626 78.5 h28 M626 84.5 h28 " fill="none" stroke="#777" stroke-width="1" shape-rendering="crispEdges"/>
<rect x="635" y="67" width="6" height="5" fill="#e0573a" />
<rect x="635" y="73" width="14" height="5" fill="#3f7dc4" />
<rect x="635" y="79" width="9" height="5" fill="#e0573a" />
<rect x="635" y="85" width="5" height="4" fill="#3f7dc4" />
<rect x="640" y="83" width="16" height="13" fill="#555" />
<rect x="641" y="84" width="14" height="11" fill="#fff" />
<path d="M644.5 88 h7 M644.5 91 h7 M646 93.5 L650 85.5" fill="none" stroke="#333" stroke-width="1.1" />
<text x="609.5" y="110.4" fill="#444" font-size="12" textLength="61.5" lengthAdjust="spacingAndGlyphs" >Conditional</text>
<text x="606.5" y="126.6" fill="#444" font-size="12" textLength="58.5" lengthAdjust="spacingAndGlyphs" >Formatting</text>
<path d="M667.5 122 L672.5 122 L670 125 Z" fill="#555" shape-rendering="geometricPrecision"/>
<rect x="691" y="68" width="25" height="21" fill="#777" />
<rect x="692" y="69" width="23" height="19" fill="#fff" />
<path d="M697.5 68 v21 M703.5 68 v21 M710.5 68 v21 M691 73.5 h25 M691 78.5 h25 M691 84.5 h25 " fill="none" stroke="#777" stroke-width="1" shape-rendering="crispEdges"/>
<rect x="698" y="74" width="17" height="14" fill="#bcd3ec" />
<path d="M704 74.5 v14 M710 74.5 v14 M698 79.5 h17 M698 84.5 h17" fill="none" stroke="#ddd" stroke-width="1" />
<path d="M709 88 L719 76" fill="none" stroke="#6a6a6a" stroke-width="3.5" />
<path d="M697 95 q2 -7 8 -9 l3 3 q-3 5 -11 6 Z" fill="#3f7dc4" />
<path d="M702 90 q2 -2 4 -2" fill="none" stroke="#fff" stroke-width="1.2" />
<text x="678.5" y="110.4" fill="#444" font-size="12" textLength="51.5" lengthAdjust="spacingAndGlyphs" >Format as</text>
<text x="687.5" y="126.6" fill="#444" font-size="12" textLength="26.5" lengthAdjust="spacingAndGlyphs" >Table</text>
<path d="M716 122 L721 122 L718.5 125 Z" fill="#555" shape-rendering="geometricPrecision"/>
<rect x="741" y="66" width="26" height="21" fill="#777" />
<rect x="742" y="67" width="24" height="19" fill="#fff" />
<path d="M750.5 66 v21 M758.5 66 v21 M741 71.5 h26 M741 76.5 h26 M741 82.5 h26 " fill="none" stroke="#777" stroke-width="1" shape-rendering="crispEdges"/>
<rect x="747" y="72" width="16" height="10" fill="#bcd3ec" />
<path d="M759 86 L769 74" fill="none" stroke="#6a6a6a" stroke-width="3.5" />
<path d="M747 93 q2 -7 8 -9 l3 3 q-3 5 -11 6 Z" fill="#3f7dc4" />
<path d="M752 88 q2 -2 4 -2" fill="none" stroke="#fff" stroke-width="1.2" />
<text x="744.5" y="110.4" fill="#444" font-size="12" textLength="20" lengthAdjust="spacingAndGlyphs" >Cell</text>
<text x="735.5" y="126.6" fill="#444" font-size="12" textLength="29.5" lengthAdjust="spacingAndGlyphs" >Styles</text>
<path d="M767 122 L772 122 L769.5 125 Z" fill="#555" shape-rendering="geometricPrecision"/>
<text x="675.5" y="145.5" fill="#666" font-size="12" textLength="28.5" lengthAdjust="spacingAndGlyphs" >Styles</text>
<rect x="780" y="62" width="1" height="84" fill="#dadada" />
<path d="M787.5 64.5 h6 v4 h-6 Z M787.5 69.5 h6 v4 h-6 Z M787.5 74.5 h6 v4 h-6 Z M793.5 69.5 h9 v4 h-9 Z" fill="none" stroke="#555" stroke-width="1" />
<rect x="795" y="71" width="6" height="2" fill="#9dbbe0" />
<path d="M789 71.5 h6" fill="none" stroke="#3f7dc4" stroke-width="1.3" />
<path d="M788 71.5 l3 -3 v6 Z" fill="#3f7dc4" />
<text x="807.5" y="76.7" fill="#444" font-size="12" textLength="28.5" lengthAdjust="spacingAndGlyphs" >Insert</text>
<path d="M845.5 71.5 L851.5 71.5 L848.5 74.5 Z" fill="#555" shape-rendering="geometricPrecision"/>
<path d="M787.5 87.5 h6 v4 h-6 Z M787.5 92.5 h6 v4 h-6 Z M787.5 97.5 h6 v4 h-6 Z" fill="none" stroke="#555" stroke-width="1" />
<rect x="793" y="93" width="4" height="3" fill="#9dbbe0" />
<path d="M797 91.5 l5 5 M802 91.5 l-5 5" fill="none" stroke="#e0573a" stroke-width="1.5" />
<text x="807.5" y="99.5" fill="#444" font-size="12" textLength="33" lengthAdjust="spacingAndGlyphs" >Delete</text>
<path d="M849 94.5 L855 94.5 L852 97.5 Z" fill="#555" shape-rendering="geometricPrecision"/>
<path d="M787.5 114.5 h15 v10 h-15 Z M787.5 117.5 h15 M787.5 121.5 h15 M792.5 114.5 v10 M797.5 114.5 v10" fill="none" stroke="#555" stroke-width="1" />
<rect x="792" y="117" width="6" height="5" fill="#3f7dc4" />
<path d="M788.5 111.5 h13" fill="none" stroke="#3f7dc4" stroke-width="1" />
<path d="M787.5 110 v3 M802.5 110 v3" fill="none" stroke="#3f7dc4" stroke-width="1" />
<text x="807.5" y="123" fill="#444" font-size="12" textLength="37.5" lengthAdjust="spacingAndGlyphs" >Format</text>
<path d="M848 117.5 L853 117.5 L850.5 120.5 Z" fill="#555" shape-rendering="geometricPrecision"/>
<text x="810" y="145.5" fill="#666" font-size="12" textLength="23.5" lengthAdjust="spacingAndGlyphs" >Cells</text>
<rect x="864" y="62" width="1" height="84" fill="#dadada" />
<path d="M887 66 v-1.5 h-14 l7.2 7.2 l-7.2 7.2 h14 v-1.5" fill="none" stroke="#444" stroke-width="2" />
<path d="M894 71.5 L900 71.5 L897 74.5 Z" fill="#555" shape-rendering="geometricPrecision"/>
<rect x="873" y="87" width="14" height="15" fill="#555" />
<rect x="874" y="88" width="12" height="13" fill="#fff" />
<rect x="873" y="87" width="14" height="3" fill="#555" />
<path d="M880 92 v6" fill="none" stroke="#3f7dc4" stroke-width="1.6" />
<path d="M877 96 l3 3 l3 -3" fill="none" stroke="#3f7dc4" stroke-width="1.6" />
<path d="M892 94.5 L898 94.5 L895 97.5 Z" fill="#555" shape-rendering="geometricPrecision"/>
<path d="M873.5 120 L881.5 112 L886.5 117 L879.5 124 Z" fill="#e8808e" />
<path d="M873.5 120 L877.5 116 L881.5 120 L878.5 124 Z" fill="#f4b7c0" />
<rect x="876.5" y="125" width="12" height="1" fill="#555" />
<path d="M892 117.5 L898 117.5 L895 120.5 Z" fill="#555" shape-rendering="geometricPrecision"/>
<text x="915.5" y="78.5" fill="#3f7dc4" font-size="15" text-anchor="middle" >A</text>
<text x="915.5" y="94.5" fill="#9a59b5" font-size="15" text-anchor="middle" >Z</text>
<path d="M923 74 h17 l-6.5 7 v9 l-4 -2.5 v-6.5 Z" fill="#666" />
<text x="908" y="110.7" fill="#444" font-size="12" textLength="33" lengthAdjust="spacingAndGlyphs" >Sort &amp;</text>
<text x="908" y="126.3" fill="#444" font-size="12" textLength="26.5" lengthAdjust="spacingAndGlyphs" >Filter</text>
<path d="M937 122 L942 122 L939.5 125 Z" fill="#555" shape-rendering="geometricPrecision"/>
<circle cx="970" cy="76" r="9.5" fill="none" stroke="#3f7dc4" stroke-width="2.6"/>
<path d="M963.5 83 L956.5 91.5" fill="none" stroke="#3f7dc4" stroke-width="3.5" stroke-linecap="round"/>
<text x="950" y="110.7" fill="#444" font-size="12" textLength="35" lengthAdjust="spacingAndGlyphs" >Find &amp;</text>
<text x="948" y="126.3" fill="#444" font-size="12" textLength="32" lengthAdjust="spacingAndGlyphs" >Select</text>
<path d="M982.5 122 L987.5 122 L985 125 Z" fill="#555" shape-rendering="geometricPrecision"/>
<text x="911" y="145.5" fill="#666" font-size="12" textLength="37" lengthAdjust="spacingAndGlyphs" >Editing</text>
<rect x="994" y="62" width="1" height="84" fill="#dadada" />
<path d="M1020.5 145 L1024.5 141 L1028.5 145" fill="none" stroke="#666" stroke-width="1.4" />
<rect x="0" y="151" width="1040" height="46" fill="#e6e6e6" />
<rect x="6" y="161" width="101" height="26" fill="#c6c6c6" />
<rect x="7" y="162" width="99" height="24" fill="#fff" />
<text x="12.5" y="178.7" fill="#444" font-size="12" textLength="23" lengthAdjust="spacingAndGlyphs" >D21</text>
<path d="M93.8 171.75 L100.8 171.75 L97.3 175.25 Z" fill="#666" shape-rendering="geometricPrecision"/>
<rect x="122" y="170" width="2" height="2" fill="#a0a0a0" />
<rect x="122" y="174" width="2" height="2" fill="#a0a0a0" />
<rect x="122" y="178" width="2" height="2" fill="#a0a0a0" />
<rect x="138" y="161" width="110" height="26" fill="#c6c6c6" />
<rect x="139" y="162" width="108" height="24" fill="#fff" />
<path d="M152 169.5 L162.5 179.5 M162.5 169.5 L152 179.5" fill="none" stroke="#bdbdbd" stroke-width="1.3" />
<path d="M186.5 175 L191 179.5 L200 169.5" fill="none" stroke="#bdbdbd" stroke-width="1.6" />
<text x="223" y="179" fill="#555" font-size="13" font-family="Liberation Serif" font-style="italic" >f</text>
<text x="228.5" y="180" fill="#555" font-size="10" font-family="Liberation Serif" font-style="italic" >x</text>
<rect x="251" y="161" width="783" height="26" fill="#c6c6c6" />
<rect x="252" y="162" width="781" height="24" fill="#fff" />
<path d="M1021.5 171.5 L1025 175 L1028.5 171.5" fill="none" stroke="#666" stroke-width="2" />
</g>
<rect x="150" y="820" width="990" height="638" fill="#fff" />
<rect x="1010" y="840" width="130" height="1" fill="#dadada" />
<rect x="1010" y="881" width="130" height="1" fill="#dadada" />
<rect x="1010" y="923" width="130" height="1" fill="#dadada" />
<rect x="1010" y="944" width="130" height="1" fill="#dadada" />
<rect x="1010" y="971" width="130" height="1" fill="#dadada" />
<rect x="1010" y="992" width="130" height="1" fill="#dadada" />
<rect x="1010" y="1013" width="130" height="1" fill="#dadada" />
<rect x="1010" y="1034" width="130" height="1" fill="#dadada" />
<rect x="1010" y="1055" width="130" height="1" fill="#dadada" />
<rect x="1010" y="1076" width="130" height="1" fill="#dadada" />
<rect x="1010" y="1097" width="130" height="1" fill="#dadada" />
<rect x="1010" y="1141" width="130" height="1" fill="#dadada" />
<rect x="1010" y="1182" width="130" height="1" fill="#dadada" />
<rect x="1010" y="1203" width="130" height="1" fill="#dadada" />
<rect x="1010" y="1224" width="130" height="1" fill="#dadada" />
<rect x="1010" y="1270" width="130" height="1" fill="#dadada" />
<rect x="1010" y="1311" width="130" height="1" fill="#dadada" />
<rect x="1010" y="1332" width="130" height="1" fill="#dadada" />
<rect x="1010" y="1375" width="130" height="1" fill="#dadada" />
<rect x="1010" y="1418" width="130" height="1" fill="#dadada" />
<rect x="1073" y="820" width="1" height="638" fill="#dadada" />
<rect x="1137" y="820" width="1" height="638" fill="#dadada" />
<rect x="150" y="820" width="860" height="638" fill="#ffcc00" />
<rect x="332" y="840" width="194" height="84" fill="#000" />
<rect x="333" y="841" width="192" height="82" fill="#fff" />
<rect x="332" y="881" width="193" height="1" fill="#000" />
<rect x="807" y="840" width="203" height="84" fill="#000" />
<rect x="808" y="841" width="201" height="82" fill="#fff" />
<rect x="807" y="881" width="202" height="1" fill="#000" />
<rect x="332" y="992" width="678" height="85" fill="#000" />
<rect x="333" y="993" width="676" height="83" fill="#fff" />
<rect x="332" y="1013" width="677" height="1" fill="#000" />
<rect x="332" y="1034" width="677" height="1" fill="#000" />
<rect x="332" y="1055" width="677" height="1" fill="#000" />
<rect x="525" y="1035" width="282" height="20" fill="#ffcc00" />
<rect x="525" y="1034" width="1" height="22" fill="#000" />
<rect x="807" y="1034" width="1" height="22" fill="#000" />
<rect x="332" y="1097" width="194" height="86" fill="#000" />
<rect x="333" y="1098" width="192" height="84" fill="#fff" />
<rect x="332" y="1141" width="193" height="1" fill="#000" />
<rect x="807" y="1097" width="203" height="45" fill="#000" />
<rect x="808" y="1098" width="201" height="43" fill="#fff" />
<rect x="332" y="1182" width="194" height="22" fill="#000" />
<rect x="333" y="1183" width="192" height="20" fill="#fff" />
<rect x="807" y="1182" width="203" height="22" fill="#000" />
<rect x="808" y="1183" width="201" height="20" fill="#fff" />
<rect x="332" y="1224" width="194" height="88" fill="#000" />
<rect x="333" y="1225" width="192" height="86" fill="#fff" />
<rect x="332" y="1270" width="193" height="1" fill="#000" />
<rect x="807" y="1224" width="203" height="88" fill="#000" />
<rect x="808" y="1225" width="201" height="86" fill="#fff" />
<rect x="807" y="1270" width="202" height="1" fill="#000" />
<rect x="332" y="1332" width="194" height="87" fill="#000" />
<rect x="333" y="1333" width="192" height="85" fill="#fff" />
<rect x="332" y="1375" width="193" height="1" fill="#000" />
<rect x="807" y="1332" width="203" height="87" fill="#000" />
<rect x="808" y="1333" width="201" height="85" fill="#fff" />
<rect x="807" y="1375" width="202" height="1" fill="#000" />
<rect x="332" y="1418" width="194" height="63" fill="#000" />
<rect x="333" y="1419" width="192" height="61" fill="#fff" />
<path d="M327 1035 L332 1035 L332 1040 Z" fill="#f00" />
<path d="M327 1098 L332 1098 L332 1103 Z" fill="#f00" />
<path d="M802 1098 L807 1098 L807 1103 Z" fill="#f00" />
<text x="152.3" y="855.8" fill="#000" font-size="16" font-family="Liberation Serif" textLength="149.5" lengthAdjust="spacingAndGlyphs" >Cơ quan, đơn vị có thẩm</text>
<text x="152.3" y="877.4" fill="#000" font-size="16" font-family="Liberation Serif" textLength="130" lengthAdjust="spacingAndGlyphs" >quyền quản lý CBCC</text>
<text x="152.3" y="898" fill="#000" font-size="16" font-family="Liberation Serif" textLength="149" lengthAdjust="spacingAndGlyphs" >Cơ quan, đơn vị sử dụng</text>
<text x="152.3" y="919.2" fill="#000" font-size="16" font-family="Liberation Serif" textLength="43" lengthAdjust="spacingAndGlyphs" >CBCC</text>
<text x="335.5" y="865.5" fill="#000" font-size="16" font-family="Liberation Serif" textLength="129.5" lengthAdjust="spacingAndGlyphs" >Trường THPT MISA</text>
<text x="335.5" y="907.5" fill="#000" font-size="16" font-family="Liberation Serif" textLength="129.5" lengthAdjust="spacingAndGlyphs" >Trường THPT MISA</text>
<text x="592" y="865.5" fill="#000" font-size="16" font-family="Liberation Serif" textLength="95" lengthAdjust="spacingAndGlyphs" >Loại cán bộ (*)</text>
<text x="592" y="907.5" fill="#000" font-size="16" font-family="Liberation Serif" textLength="112.5" lengthAdjust="spacingAndGlyphs" >Số hiệu cán bộ (*)</text>
<text x="809.5" y="865.5" fill="#000" font-size="16" font-family="Liberation Serif" textLength="62.5" lengthAdjust="spacingAndGlyphs" >Viên chức</text>
<text x="809.5" y="907.5" fill="#000" font-size="16" font-family="Liberation Serif" textLength="81.5" lengthAdjust="spacingAndGlyphs" >SHCB00020</text>
<text x="382.5" y="965.5" fill="#000" font-size="20.5" font-family="Liberation Serif" font-weight="bold" textLength="394.5" lengthAdjust="spacingAndGlyphs" >SƠ YẾU LÝ LỊCH CÁN BỘ, CÔNG CHỨC</text>
<text x="151.8" y="1008.8" fill="#000" font-size="16" font-family="Liberation Serif" textLength="98.5" lengthAdjust="spacingAndGlyphs" >1) Họ và tên (*)</text>
<text x="335.5" y="1008.8" fill="#000" font-size="16" font-family="Liberation Serif" textLength="118" lengthAdjust="spacingAndGlyphs" >HOÀNG THU HÀ</text>
<text x="151.8" y="1029.5" fill="#000" font-size="16" font-family="Liberation Serif" textLength="95.5" lengthAdjust="spacingAndGlyphs" >2) Tên gọi khác</text>
<text x="151.8" y="1050.5" fill="#000" font-size="16" font-family="Liberation Serif" textLength="147" lengthAdjust="spacingAndGlyphs" >3) Ngày,tháng, năm sinh</text>
<text x="335.5" y="1050.5" fill="#000" font-size="16" font-family="Liberation Serif" textLength="71" lengthAdjust="spacingAndGlyphs" >10/11/1987</text>
<text x="592" y="1050.5" fill="#000" font-size="16" font-family="Liberation Serif" textLength="51" lengthAdjust="spacingAndGlyphs" >Giới tính</text>
<text x="809.5" y="1050.5" fill="#000" font-size="16" font-family="Liberation Serif" textLength="21" lengthAdjust="spacingAndGlyphs" >Nữ</text>
<text x="151.8" y="1071.5" fill="#000" font-size="16" font-family="Liberation Serif" textLength="67.5" lengthAdjust="spacingAndGlyphs" >4) Nơi sinh</text>
<text x="335.5" y="1071.5" fill="#000" font-size="16" font-family="Liberation Serif" textLength="137" lengthAdjust="spacingAndGlyphs" >Bệnh viện phụ sản TW</text>
<text x="151.8" y="1092.3" fill="#000" font-size="16" font-family="Liberation Serif" textLength="76.5" lengthAdjust="spacingAndGlyphs" >5) Quê quán</text>
<text x="151" y="1125" fill="#000" font-size="16" font-family="Liberation Serif" font-style="italic" textLength="78" lengthAdjust="spacingAndGlyphs" >Xã, phường</text>
<text x="335.5" y="1125" fill="#000" font-size="16" font-family="Liberation Serif" textLength="94.5" lengthAdjust="spacingAndGlyphs" >Dịch Vọng Hậu</text>
<text x="592" y="1125" fill="#000" font-size="16" font-family="Liberation Serif" font-style="italic" textLength="82" lengthAdjust="spacingAndGlyphs" >Quận, huyện</text>
<text x="809.5" y="1125" fill="#000" font-size="16" font-family="Liberation Serif" textLength="58" lengthAdjust="spacingAndGlyphs" >Cầu Giấy</text>
<text x="151.5" y="1166.6" fill="#000" font-size="16" font-family="Liberation Serif" font-style="italic" textLength="103" lengthAdjust="spacingAndGlyphs" >Tỉnh, thành phố</text>
<text x="335.5" y="1166.6" fill="#000" font-size="16" font-family="Liberation Serif" textLength="113.5" lengthAdjust="spacingAndGlyphs" >Thành phố Hà Nội</text>
<text x="151.8" y="1198.8" fill="#000" font-size="16" font-family="Liberation Serif" textLength="66" lengthAdjust="spacingAndGlyphs" >6) Dân tộc</text>
<text x="335.5" y="1198.8" fill="#000" font-size="16" font-family="Liberation Serif" textLength="28.5" lengthAdjust="spacingAndGlyphs" >Kinh</text>
<text x="592" y="1198.8" fill="#000" font-size="16" font-family="Liberation Serif" textLength="70.5" lengthAdjust="spacingAndGlyphs" >7) Tôn giáo</text>
<text x="809.5" y="1198.8" fill="#000" font-size="16" font-family="Liberation Serif" textLength="42.5" lengthAdjust="spacingAndGlyphs" >Không</text>
<text x="151.8" y="1220.2" fill="#000" font-size="16" font-family="Liberation Serif" textLength="211" lengthAdjust="spacingAndGlyphs" >8) Nơi đăng ký hộ khẩu thường trú</text>
<text x="151.5" y="1252.3" fill="#000" font-size="16" font-family="Liberation Serif" font-style="italic" textLength="123" lengthAdjust="spacingAndGlyphs" >Số nhà, đường phố</text>
<text x="335.5" y="1252.3" fill="#000" font-size="16" font-family="Liberation Serif" textLength="36.5" lengthAdjust="spacingAndGlyphs" >Số 20</text>
<text x="592" y="1252.3" fill="#000" font-size="16" font-family="Liberation Serif" font-style="italic" textLength="78" lengthAdjust="spacingAndGlyphs" >Xã, phường</text>
<text x="809.5" y="1252.3" fill="#000" font-size="16" font-family="Liberation Serif" textLength="94.5" lengthAdjust="spacingAndGlyphs" >Dịch Vọng Hậu</text>
<text x="151.5" y="1296.1" fill="#000" font-size="16" font-family="Liberation Serif" font-style="italic" textLength="82" lengthAdjust="spacingAndGlyphs" >Quận, huyện</text>
<text x="335.5" y="1296.1" fill="#000" font-size="16" font-family="Liberation Serif" textLength="56.5" lengthAdjust="spacingAndGlyphs" >Cầu Giấy</text>
<text x="592" y="1296.1" fill="#000" font-size="16" font-family="Liberation Serif" font-style="italic" textLength="103" lengthAdjust="spacingAndGlyphs" >Tỉnh, thành phố</text>
<text x="809.5" y="1296.1" fill="#000" font-size="16" font-family="Liberation Serif" textLength="114" lengthAdjust="spacingAndGlyphs" >Thành phố Hà Nội</text>
<text x="151.5" y="1359.6" fill="#000" font-size="16" font-family="Liberation Serif" font-style="italic" textLength="123" lengthAdjust="spacingAndGlyphs" >Số nhà, đường phố</text>
<text x="335.5" y="1359.6" fill="#000" font-size="16" font-family="Liberation Serif" textLength="36.5" lengthAdjust="spacingAndGlyphs" >Số 20</text>
<text x="592" y="1359.6" fill="#000" font-size="16" font-family="Liberation Serif" font-style="italic" textLength="78" lengthAdjust="spacingAndGlyphs" >Xã, phường</text>
<text x="809.5" y="1359.6" fill="#000" font-size="16" font-family="Liberation Serif" textLength="94.5" lengthAdjust="spacingAndGlyphs" >Dịch Vọng Hậu</text>
<text x="151.5" y="1401.4" fill="#000" font-size="16" font-family="Liberation Serif" font-style="italic" textLength="82" lengthAdjust="spacingAndGlyphs" >Quận, huyện</text>
<text x="335.5" y="1401.4" fill="#000" font-size="16" font-family="Liberation Serif" textLength="56.5" lengthAdjust="spacingAndGlyphs" >Cầu Giấy</text>
<text x="592" y="1401.4" fill="#000" font-size="16" font-family="Liberation Serif" font-style="italic" textLength="103" lengthAdjust="spacingAndGlyphs" >Tỉnh, thành phố</text>
<text x="809.5" y="1401.4" fill="#000" font-size="16" font-family="Liberation Serif" textLength="114" lengthAdjust="spacingAndGlyphs" >Thành phố Hà Nội</text>
<text x="151.8" y="1327.5" fill="#000" font-size="16" font-family="Liberation Serif" textLength="105.5" lengthAdjust="spacingAndGlyphs" >9) Nơi ở hiện nay</text>
<text x="153" y="1447" fill="#000" font-size="16" font-family="Liberation Serif" textLength="158.5" lengthAdjust="spacingAndGlyphs" >10) Nghề nghiệp khi được</text>
<text x="335" y="1450" fill="#000" font-size="16" font-family="Liberation Serif" textLength="54" lengthAdjust="spacingAndGlyphs" >Sinh viên</text>
<clipPath id="cl21"><rect x="149" y="1419" width="990" height="39"/></clipPath>
<g clip-path="url(#cl21)">
<text x="153" y="1470" fill="#000" font-size="16" font-family="Liberation Serif" textLength="70" lengthAdjust="spacingAndGlyphs" >tuyển dụng</text>
</g>
<rect x="524" y="1417" width="66" height="2" fill="#217346" />
<rect x="524" y="1417" width="2" height="41" fill="#217346" />
<rect x="588" y="1417" width="2" height="41" fill="#217346" />
<rect x="1140" y="819" width="1" height="639" fill="#a0a0a0" />
<rect x="150" y="1458" width="991" height="1" fill="#a0a0a0" />
<rect x="124" y="800" width="1016" height="20" fill="#e6e6e6" />
<rect x="526" y="800" width="63" height="19" fill="#d2d2d2" />
<rect x="526" y="817" width="63" height="2" fill="#217346" />
<rect x="332" y="800" width="1" height="19" fill="url(#sepg)" />
<rect x="434" y="800" width="1" height="19" fill="url(#sepg)" />
<rect x="525" y="800" width="1" height="19" fill="url(#sepg)" />
<rect x="589" y="800" width="1" height="19" fill="url(#sepg)" />
<rect x="652" y="800" width="1" height="19" fill="url(#sepg)" />
<rect x="739" y="800" width="1" height="19" fill="url(#sepg)" />
<rect x="807" y="800" width="1" height="19" fill="url(#sepg)" />
<rect x="908" y="800" width="1" height="19" fill="url(#sepg)" />
<rect x="1009" y="800" width="1" height="19" fill="url(#sepg)" />
<rect x="1073" y="800" width="1" height="19" fill="url(#sepg)" />
<rect x="1137" y="800" width="1" height="19" fill="url(#sepg)" />
<rect x="124" y="819" width="1016" height="1" fill="#9b9b9b" />
<path d="M146 816 L146 804 L134 816 Z" fill="#b4b4b4" />
<text x="241" y="815" fill="#222" font-size="13" text-anchor="middle" >A</text>
<text x="383.5" y="815" fill="#222" font-size="13" text-anchor="middle" >B</text>
<text x="480" y="815" fill="#222" font-size="13" text-anchor="middle" >C</text>
<text x="557.5" y="815" fill="#217346" font-size="13" text-anchor="middle" >D</text>
<text x="621" y="815" fill="#222" font-size="13" text-anchor="middle" >E</text>
<text x="696" y="815" fill="#222" font-size="13" text-anchor="middle" >F</text>
<text x="773.5" y="815" fill="#222" font-size="13" text-anchor="middle" >G</text>
<text x="858" y="815" fill="#222" font-size="13" text-anchor="middle" >H</text>
<text x="959" y="815" fill="#222" font-size="13" text-anchor="middle" >I</text>
<text x="1041.5" y="815" fill="#222" font-size="13" text-anchor="middle" >J</text>
<text x="1105.5" y="815" fill="#222" font-size="13" text-anchor="middle" >K</text>
<rect x="124" y="820" width="25" height="638" fill="#e6e6e6" />
<rect x="124" y="1419" width="25" height="39" fill="#d2d2d2" />
<rect x="124" y="840" width="25" height="1" fill="#b0b0b0" />
<rect x="124" y="881" width="25" height="1" fill="#b0b0b0" />
<rect x="124" y="923" width="25" height="1" fill="#b0b0b0" />
<rect x="124" y="944" width="25" height="1" fill="#b0b0b0" />
<rect x="124" y="971" width="25" height="1" fill="#b0b0b0" />
<rect x="124" y="992" width="25" height="1" fill="#b0b0b0" />
<rect x="124" y="1013" width="25" height="1" fill="#b0b0b0" />
<rect x="124" y="1034" width="25" height="1" fill="#b0b0b0" />
<rect x="124" y="1055" width="25" height="1" fill="#b0b0b0" />
<rect x="124" y="1076" width="25" height="1" fill="#b0b0b0" />
<rect x="124" y="1097" width="25" height="1" fill="#b0b0b0" />
<rect x="124" y="1141" width="25" height="1" fill="#b0b0b0" />
<rect x="124" y="1182" width="25" height="1" fill="#b0b0b0" />
<rect x="124" y="1203" width="25" height="1" fill="#b0b0b0" />
<rect x="124" y="1224" width="25" height="1" fill="#b0b0b0" />
<rect x="124" y="1270" width="25" height="1" fill="#b0b0b0" />
<rect x="124" y="1311" width="25" height="1" fill="#b0b0b0" />
<rect x="124" y="1332" width="25" height="1" fill="#b0b0b0" />
<rect x="124" y="1375" width="25" height="1" fill="#b0b0b0" />
<rect x="124" y="1418" width="25" height="1" fill="#b0b0b0" />
<rect x="149" y="800" width="1" height="658" fill="#9b9b9b" />
<rect x="148" y="1419" width="2" height="39" fill="#217346" />
<text x="136.5" y="836" fill="#222" font-size="13.5" text-anchor="middle" >1</text>
<text x="136.5" y="877" fill="#222" font-size="13.5" text-anchor="middle" >2</text>
<text x="136.5" y="919" fill="#222" font-size="13.5" text-anchor="middle" >3</text>
<text x="136.5" y="940" fill="#222" font-size="13.5" text-anchor="middle" >4</text>
<text x="136.5" y="967" fill="#222" font-size="13.5" text-anchor="middle" >5</text>
<text x="136.5" y="988" fill="#222" font-size="13.5" text-anchor="middle" >6</text>
<text x="136.5" y="1009" fill="#222" font-size="13.5" text-anchor="middle" >7</text>
<text x="136.5" y="1030" fill="#222" font-size="13.5" text-anchor="middle" >8</text>
<text x="136.5" y="1051" fill="#222" font-size="13.5" text-anchor="middle" >9</text>
<text x="136.5" y="1072" fill="#222" font-size="13.5" text-anchor="middle" >10</text>
<text x="136.5" y="1093" fill="#222" font-size="13.5" text-anchor="middle" >11</text>
<text x="136.5" y="1137" fill="#222" font-size="13.5" text-anchor="middle" >12</text>
<text x="136.5" y="1178" fill="#222" font-size="13.5" text-anchor="middle" >13</text>
<text x="136.5" y="1199" fill="#222" font-size="13.5" text-anchor="middle" >14</text>
<text x="136.5" y="1220" fill="#222" font-size="13.5" text-anchor="middle" >15</text>
<text x="136.5" y="1266" fill="#222" font-size="13.5" text-anchor="middle" >16</text>
<text x="136.5" y="1307" fill="#222" font-size="13.5" text-anchor="middle" >17</text>
<text x="136.5" y="1328" fill="#222" font-size="13.5" text-anchor="middle" >18</text>
<text x="136.5" y="1371" fill="#222" font-size="13.5" text-anchor="middle" >19</text>
<text x="136.5" y="1414" fill="#222" font-size="13.5" text-anchor="middle" >20</text>
<rect x="1141" y="800" width="21" height="658" fill="#e6e6e6" />
<rect x="1144" y="802" width="15" height="15" fill="#ababab" />
<rect x="1145" y="803" width="13" height="13" fill="#fff" />
<path d="M1147.5 812 L1151.5 808 L1155.5 812 Z" fill="#777" />
<rect x="1144" y="817" width="15" height="627" fill="#dadada" />
<rect x="1144" y="817" width="15" height="93" fill="#ababab" />
<rect x="1145" y="818" width="13" height="91" fill="#fff" />
<rect x="1144" y="1444" width="15" height="15" fill="#ababab" />
<rect x="1145" y="1445" width="13" height="13" fill="#fff" />
<path d="M1147.5 1449.5 L1151.5 1453.5 L1155.5 1449.5 Z" fill="#777" />
<rect x="124" y="1459" width="1038" height="27" fill="#e6e6e6" />
<path d="M155 1467.5 L151 1471.5 L155 1475.5 Z" fill="#217346" />
<path d="M180 1467.5 L184 1471.5 L180 1475.5 Z" fill="#217346" />
<rect x="205" y="1474" width="2" height="2" fill="#217346" />
<rect x="209" y="1474" width="2" height="2" fill="#217346" />
<rect x="213" y="1474" width="2" height="2" fill="#217346" />
<rect x="224" y="1462" width="1" height="21" fill="#c0c0c0" />
<text x="240.5" y="1476" fill="#444" font-size="12.5" textLength="140.5" lengthAdjust="spacingAndGlyphs" >DS_nhap_khau_tiep_theo</text>
<rect x="398" y="1459" width="1" height="24" fill="#a8a8a8" />
<rect x="399" y="1459" width="133" height="22" fill="#fff" />
<rect x="532" y="1459" width="1" height="24" fill="#a8a8a8" />
<rect x="398" y="1481" width="135" height="2" fill="#217346" />
<text x="410" y="1476" fill="#217346" font-size="12.5" font-weight="bold" textLength="110" lengthAdjust="spacingAndGlyphs" >SHCB00020_HTHA</text>
<text x="546.3" y="1476" fill="#444" font-size="12.5" textLength="30.5" lengthAdjust="spacingAndGlyphs" >SHCB</text>
<rect x="585" y="1474" width="2" height="2" fill="#217346" />
<rect x="589" y="1474" width="2" height="2" fill="#217346" />
<rect x="593" y="1474" width="2" height="2" fill="#217346" />
<circle cx="617" cy="1471.8" r="7.5" fill="none" stroke="#777" stroke-width="1.2"/>
<path d="M613 1471.8 h8 M617 1467.8 v8" fill="none" stroke="#777" stroke-width="1.5" />
<rect x="646" y="1466" width="1" height="2" fill="#b0b0b0" />
<rect x="646" y="1470" width="1" height="2" fill="#b0b0b0" />
<rect x="646" y="1474" width="1" height="2" fill="#b0b0b0" />
<rect x="662" y="1465" width="16" height="15" fill="#ababab" />
<rect x="663" y="1466" width="14" height="13" fill="#fff" />
<path d="M672 1468.5 L668 1472.5 L672 1476.5 Z" fill="#777" />
<rect x="677" y="1465" width="464" height="15" fill="#dadada" />
<rect x="677" y="1465" width="411" height="15" fill="#ababab" />
<rect x="678" y="1466" width="409" height="13" fill="#fff" />
<rect x="1126" y="1465" width="15" height="15" fill="#ababab" />
<rect x="1127" y="1466" width="13" height="13" fill="#fff" />
<path d="M1131.5 1468.5 L1135.5 1472.5 L1131.5 1476.5 Z" fill="#777" />
<rect x="124" y="1486" width="1038" height="22" fill="#f1f1f1" />
<rect x="124" y="1486" width="1038" height="1" fill="#c8c8c8" />
<text x="131.3" y="1501.6" fill="#444" font-size="12" textLength="30.5" lengthAdjust="spacingAndGlyphs" >Ready</text>
<rect x="859" y="1487" width="38" height="21" fill="#d5d5d5" />
<path d="M871 1490.5 h12 M871.5 1490 v13 M871 1494.5 h12 M875.5 1490 v13 M871 1498.5 h12 M879.5 1490 v13 M871 1502.5 h12 M883.5 1490 v13 " fill="none" stroke="#666" stroke-width="1" />
<path d="M909.5 1490.5 h13 v12 h-13 Z M912.5 1493.5 h7 v6 h-7 Z M913.5 1495.5 h5 M913.5 1497.5 h5" fill="none" stroke="#666" stroke-width="1" />
<path d="M947.5 1490.5 h13 v12 h-13 Z M947.5 1497.5 h13 M951.5 1490.5 v7 M956.5 1490.5 v7" fill="none" stroke="#666" stroke-width="1" />
<rect x="978" y="1496" width="6" height="2" fill="#555" />
<rect x="988" y="1496" width="100" height="1" fill="#b0b0b0" />
<rect x="1036" y="1490" width="5" height="12" fill="#666" />
<rect x="1092" y="1496" width="9" height="2" fill="#555" />
<rect x="1096" y="1492" width="2" height="9" fill="#555" />
<text x="1115" y="1501.5" fill="#444" font-size="12" textLength="26.5" lengthAdjust="spacingAndGlyphs" >100%</text>
<rect x="123" y="603" width="1" height="906" fill="#217346" />
<rect x="1162" y="603" width="1" height="906" fill="#217346" />
<rect x="123" y="1507" width="1040" height="2" fill="#217346" />
</svg>
</body></html>
